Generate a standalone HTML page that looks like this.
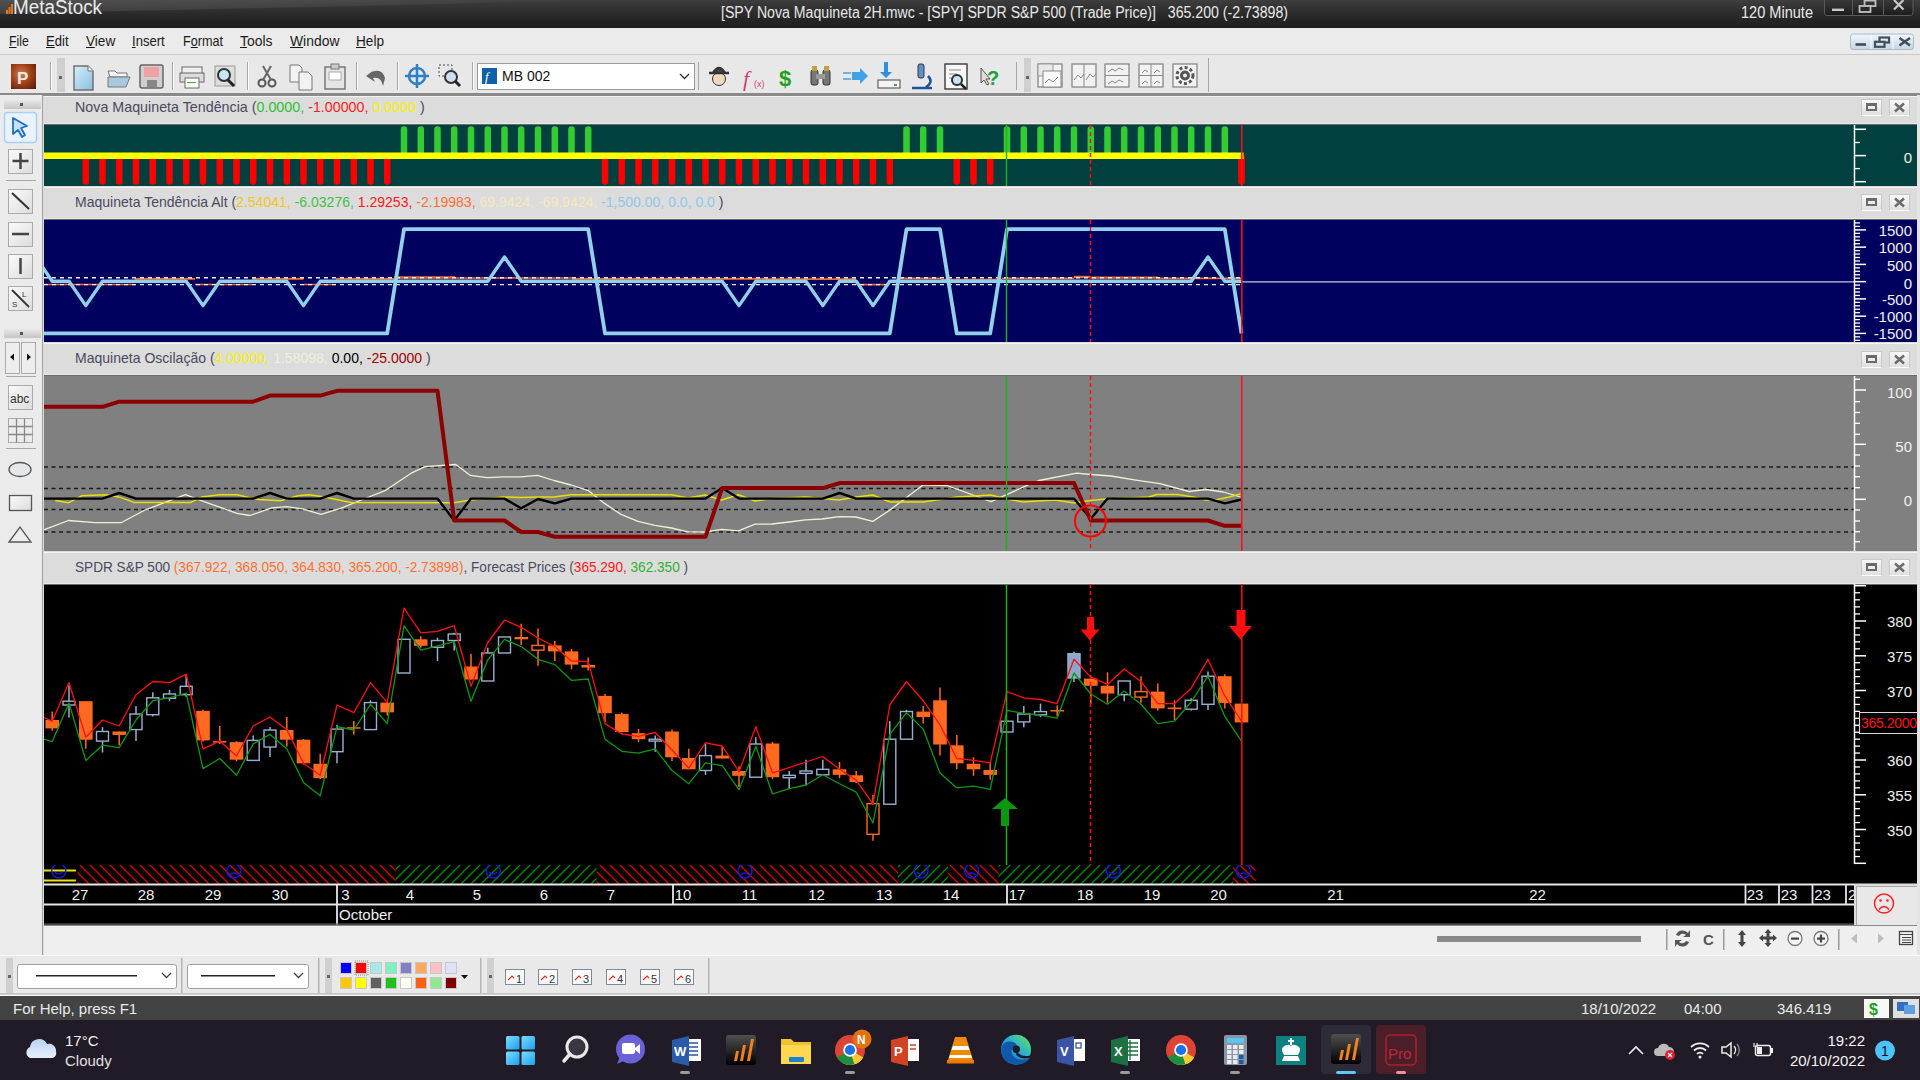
<!DOCTYPE html><html><head><meta charset="utf-8"><style>html,body{margin:0;padding:0;width:1920px;height:1080px;overflow:hidden;background:#dcdcdc;font-family:"Liberation Sans",sans-serif;}svg{display:block}</style></head><body><div style="position:relative;width:1920px;height:1080px;overflow:hidden"><div style="position:absolute;left:0px;top:0px;width:1920px;height:28px;background:linear-gradient(#3e3e3e,#2a2a2a 50%,#1e1e1e);"></div>
<svg style="position:absolute;left:0;top:0" width="1920" height="28"><defs><linearGradient id="gl" x1="0" y1="0" x2="1" y2="0"><stop offset="0" stop-color="#fff" stop-opacity="0.10"/><stop offset="0.6" stop-color="#fff" stop-opacity="0.06"/><stop offset="1" stop-color="#fff" stop-opacity="0"/></linearGradient></defs><path d="M0 0 H600 Q350 6 0 14z" fill="url(#gl)"/></svg>
<svg style="position:absolute;left:0;top:0" width="20" height="20"><path d="M6 14 v-4 h2 v4z M8.5 14 v-7 h2 v7z M11 14 v-10 h2 v10z" fill="#e87818"/></svg>
<div style="position:absolute;left:13px;top:-4.5px;font-size:20px;line-height:22px;color:#ececec;white-space:pre;transform:scaleX(0.9420);transform-origin:0 0;">MetaStock</div>
<div style="position:absolute;left:721px;top:3.5px;font-size:16px;line-height:18px;color:#e8e8e8;white-space:pre;transform:scaleX(0.8835);transform-origin:0 0;">[SPY Nova Maquineta 2H.mwc - [SPY] SPDR S&amp;P 500 (Trade Price)]   365.200 (-2.73898)</div>
<div style="position:absolute;left:1741px;top:3.5px;font-size:16px;line-height:18px;color:#e8e8e8;white-space:pre;transform:scaleX(0.9095);transform-origin:0 0;">120 Minute</div>
<svg style="position:absolute;left:0;top:0" width="1920" height="28"><defs><linearGradient id="wb" x1="0" y1="0" x2="0" y2="1"><stop offset="0" stop-color="#404040"/><stop offset="1" stop-color="#1c1c1c"/></linearGradient></defs><rect x="1824.5" y="-4" width="88.5" height="19.5" rx="2.5" fill="url(#wb)" stroke="#5a5a5a"/><rect x="1852" y="0" width="1" height="15" fill="#5a5a5a"/><rect x="1883" y="0" width="1" height="15" fill="#5a5a5a"/><rect x="1832" y="8.6" width="12" height="2.4" fill="#c8c8c8"/><rect x="1864.5" y="0.6" width="11" height="5.5" fill="none" stroke="#c0c0c0" stroke-width="1.8"/><rect x="1859.5" y="6" width="11" height="6" fill="#2a2a2a" stroke="#c0c0c0" stroke-width="1.8"/><path d="M1894 0 L1903.5 9.5 M1903.5 0 L1894 9.5" stroke="#c8c8c8" stroke-width="2.2"/></svg>
<div style="position:absolute;left:0px;top:28px;width:1920px;height:27px;background:#ebebeb;border-bottom:1px solid #c8c8c8;box-sizing:border-box;"></div>
<div style="position:absolute;left:9.4px;top:32px;font-size:15px;line-height:17px;color:#1a1a1a;white-space:pre;transform:scaleX(0.8192);transform-origin:0 0;"><u>F</u>ile</div>
<div style="position:absolute;left:46.2px;top:32px;font-size:15px;line-height:17px;color:#1a1a1a;white-space:pre;transform:scaleX(0.8705);transform-origin:0 0;"><u>E</u>dit</div>
<div style="position:absolute;left:85.8px;top:32px;font-size:15px;line-height:17px;color:#1a1a1a;white-space:pre;transform:scaleX(0.9056);transform-origin:0 0;"><u>V</u>iew</div>
<div style="position:absolute;left:132.3px;top:32px;font-size:15px;line-height:17px;color:#1a1a1a;white-space:pre;transform:scaleX(0.8717);transform-origin:0 0;"><u>I</u>nsert</div>
<div style="position:absolute;left:183px;top:32px;font-size:15px;line-height:17px;color:#1a1a1a;white-space:pre;transform:scaleX(0.8420);transform-origin:0 0;">F<u>o</u>rmat</div>
<div style="position:absolute;left:240px;top:32px;font-size:15px;line-height:17px;color:#1a1a1a;white-space:pre;transform:scaleX(0.9281);transform-origin:0 0;"><u>T</u>ools</div>
<div style="position:absolute;left:289.6px;top:32px;font-size:15px;line-height:17px;color:#1a1a1a;white-space:pre;transform:scaleX(0.9260);transform-origin:0 0;"><u>W</u>indow</div>
<div style="position:absolute;left:356px;top:32px;font-size:15px;line-height:17px;color:#1a1a1a;white-space:pre;transform:scaleX(0.9076);transform-origin:0 0;"><u>H</u>elp</div>
<svg style="position:absolute;left:0;top:28px" width="1920" height="27" viewBox="0 28 1920 27"><defs><linearGradient id="mb" x1="0" y1="0" x2="0" y2="1"><stop offset="0" stop-color="#f2f6fa"/><stop offset="1" stop-color="#c4d6e4"/></linearGradient></defs><rect x="1850.5" y="34" width="63" height="15.5" rx="2.5" fill="url(#mb)" stroke="#a8bccc"/><rect x="1870.5" y="35" width="1" height="14" fill="#f8fbfd"/><rect x="1892.5" y="35" width="1" height="14" fill="#f8fbfd"/><rect x="1855.5" y="43.2" width="10.5" height="2.6" fill="#3c5060"/><rect x="1879.5" y="37.5" width="9.5" height="5" fill="none" stroke="#3c5060" stroke-width="2.2"/><rect x="1875" y="41.8" width="9.5" height="5" fill="#d4e2ec" stroke="#3c5060" stroke-width="2.2"/><path d="M1899.5 38 L1910 45.6 M1910 38 L1899.5 45.6" stroke="#3c5060" stroke-width="2.5"/></svg>
<div style="position:absolute;left:0px;top:55px;width:1920px;height:40px;background:#e8e8e8;border-bottom:2px solid #8a8a8a;box-sizing:border-box;"></div>
<svg style="position:absolute;left:0;top:0" width="1920" height="100"><defs><radialGradient id="pg" cx="0.4" cy="0.4" r="0.8"><stop offset="0" stop-color="#c88050"/><stop offset="0.5" stop-color="#a04018"/><stop offset="1" stop-color="#601808"/></radialGradient><linearGradient id="docg" x1="0" y1="0" x2="1" y2="1"><stop offset="0" stop-color="#d8ecf8"/><stop offset="1" stop-color="#88c0e0"/></linearGradient></defs><rect x="11" y="64" width="25" height="25" fill="url(#pg)"/><text x="17" y="84" font-size="17" font-family="Liberation Sans" font-weight="bold" fill="#f0e8e0">P</text><rect x="50" y="62" width="1" height="28" fill="#a8a8a8"/><rect x="51" y="62" width="1" height="28" fill="#fafafa"/><rect x="172" y="62" width="1" height="28" fill="#a8a8a8"/><rect x="173" y="62" width="1" height="28" fill="#fafafa"/><rect x="247" y="62" width="1" height="28" fill="#a8a8a8"/><rect x="248" y="62" width="1" height="28" fill="#fafafa"/><rect x="356" y="62" width="1" height="28" fill="#a8a8a8"/><rect x="357" y="62" width="1" height="28" fill="#fafafa"/><rect x="397" y="62" width="1" height="28" fill="#a8a8a8"/><rect x="398" y="62" width="1" height="28" fill="#fafafa"/><rect x="472" y="62" width="1" height="28" fill="#a8a8a8"/><rect x="473" y="62" width="1" height="28" fill="#fafafa"/><rect x="57" y="58" width="8" height="34" fill="#cfcfcf"/><rect x="59" y="76" width="3" height="3" fill="#666"/><path d="M74 66 h14 l5 5 v19 h-19z" fill="url(#docg)" stroke="#707070" stroke-width="1.5"/><path d="M88 66 v5 h5" fill="#fff" stroke="#707070"/><path d="M108 71 h7 l2 2 h10 v4 h-17z" fill="#f4f4f4" stroke="#777"/><path d="M108 77 h22 l-4 10 h-18z" fill="#a8c8e0" stroke="#777"/><rect x="140" y="65" width="23" height="23" rx="2" fill="#cfcfcf" stroke="#666" stroke-width="1.5"/><rect x="144" y="67" width="15" height="10" fill="#f0a0a0"/><rect x="147" y="80" width="10" height="7" fill="#888"/><rect x="182" y="67" width="20" height="9" fill="#eee" stroke="#666"/><rect x="180" y="73" width="24" height="9" fill="#ddd" stroke="#666"/><rect x="185" y="78" width="14" height="10" fill="#fff" stroke="#666"/><rect x="187" y="82" width="9" height="1" fill="#4a4"/><rect x="215" y="66" width="20" height="20" fill="#ddd" stroke="#999"/><circle cx="224" cy="75" r="6" fill="#cce4f4" stroke="#333" stroke-width="2"/><path d="M228 80 l6 6" stroke="#222" stroke-width="3"/><circle cx="262" cy="83" r="3.5" fill="none" stroke="#555" stroke-width="2"/><circle cx="272" cy="83" r="3.5" fill="none" stroke="#555" stroke-width="2"/><path d="M263 80 L271 66 M271 80 L263 66" stroke="#666" stroke-width="2"/><path d="M290 65 h9 l3 3 v14 h-12z" fill="#f2f2f2" stroke="#777"/><path d="M299 72 h9 l4 4 v14 h-13z" fill="#f2f2f2" stroke="#777"/><rect x="325" y="67" width="20" height="22" fill="#e4e4e4" stroke="#777" stroke-width="1.5"/><rect x="331" y="64" width="8" height="5" fill="#ccc" stroke="#777"/><rect x="329" y="72" width="12" height="8" fill="#fff" stroke="#aaa"/><path d="M372 72 q10 -4 13 6 l-2 8 q-2 -10 -10 -8 l2 4 l-9 -6 l8 -6z" fill="#666"/><circle cx="417" cy="76" r="8" fill="#dfe8f0" stroke="#3080c0" stroke-width="2.5"/><path d="M417 64 v24 M405 76 h24" stroke="#3080c0" stroke-width="2.5"/><rect x="439" y="65" width="13" height="11" fill="none" stroke="#444" stroke-dasharray="2 2"/><circle cx="451" cy="77" r="6" fill="#cce0f0" stroke="#333" stroke-width="2"/><path d="M455 81 l5 5" stroke="#222" stroke-width="3"/><rect x="477.5" y="63.5" width="217" height="26" fill="#fff" stroke="#9a9a9a"/><rect x="482" y="68" width="15" height="16" fill="#1060a8"/><text x="485" y="81" font-size="13" font-style="italic" font-family="Liberation Serif" fill="#fff">f</text><text x="502" y="81" font-size="14" font-family="Liberation Sans" fill="#111">MB 002</text><path d="M680 74 l4.5 4.5 l4.5 -4.5" stroke="#333" stroke-width="1.3" fill="none"/><rect x="698" y="62" width="1" height="28" fill="#a8a8a8"/><circle cx="719" cy="79" r="6.5" fill="#f0d8c0" stroke="#333"/><path d="M709 73 h20 M713 73 q6 -10 12 0" stroke="#333" stroke-width="2.5" fill="#444"/><text x="743" y="86" font-size="22" font-style="italic" font-family="Liberation Serif" fill="#d04070">f</text><text x="754" y="87" font-size="9" font-family="Liberation Sans" fill="#d04070">(x)</text><text x="779" y="86" font-size="22" font-weight="bold" font-family="Liberation Sans" fill="#20a020">$</text><rect x="811" y="70" width="7" height="15" rx="2" fill="#777" stroke="#333"/><rect x="823" y="70" width="7" height="15" rx="2" fill="#777" stroke="#333"/><rect x="816" y="74" width="9" height="5" fill="#999"/><rect x="812" y="66" width="5" height="5" fill="#c0a040"/><rect x="824" y="66" width="5" height="5" fill="#c0a040"/><path d="M843 73 h8 M843 79 h8" stroke="#70b0e8" stroke-width="2"/><path d="M852 72 h8 v-4 l8 8 l-8 8 v-4 h-8z" fill="#40a0e8"/><path d="M884 62 v10 h-4 l6 6 l6 -6 h-4 v-10z" fill="#3090e0"/><rect x="878" y="80" width="22" height="8" fill="#f4f4f4" stroke="#444"/><rect x="894" y="84" width="3" height="2" fill="#4a4"/><rect x="918" y="64" width="6" height="14" rx="2" fill="#6090c0" stroke="#335"/><path d="M912 88 h20 M928 76 q6 6 -2 11" stroke="#2050a0" stroke-width="2.5" fill="none"/><rect x="945" y="64" width="22" height="25" fill="#f8f8f8" stroke="#444" stroke-width="1.5"/><path d="M949 70 h12 M949 74 h8 M949 78 h6" stroke="#888"/><circle cx="957" cy="80" r="5" fill="#cce0f0" stroke="#233" stroke-width="2"/><path d="M961 84 l5 5" stroke="#222" stroke-width="2.5"/><path d="M981 68 l0 15 l3 -3 l3 5 l2 -1 l-3 -5 l4 0z" fill="#ddd" stroke="#555"/><text x="987" y="85" font-size="20" font-weight="bold" font-family="Liberation Sans" fill="#20a040">?</text><rect x="1016" y="62" width="1" height="28" fill="#a8a8a8"/><rect x="1024" y="58" width="7" height="34" fill="#cfcfcf"/><rect x="1026" y="76" width="3" height="3" fill="#666"/><rect x="1038" y="64" width="24" height="23" fill="#f2f2f2" stroke="#888" stroke-width="1.3"/><rect x="1072" y="64" width="24" height="23" fill="#f2f2f2" stroke="#888" stroke-width="1.3"/><rect x="1105" y="64" width="24" height="23" fill="#f2f2f2" stroke="#888" stroke-width="1.3"/><rect x="1139" y="64" width="24" height="23" fill="#f2f2f2" stroke="#888" stroke-width="1.3"/><rect x="1173" y="64" width="24" height="23" fill="#f2f2f2" stroke="#888" stroke-width="1.3"/><rect x="1038" y="64" width="15" height="12" fill="#e8e8e8" stroke="#999"/><rect x="1043" y="71" width="18" height="16" fill="#f8f8f8" stroke="#888"/><path d="M1045 83 l4 -4 l4 3 l5 -5" stroke="#888" fill="none"/><path d="M1084 64 v23 M1074 80 l4 -5 l3 3 l3 -4 M1086 80 l4 -6 l3 3 l3 -3" stroke="#888" fill="none"/><path d="M1105 75.5 h24 M1108 72 l4 -3 l3 2 l4 -3 l4 2 M1108 84 l4 -3 l3 2 l4 -3 l4 2" stroke="#888" fill="none"/><path d="M1151 64 v23 M1139 75.5 h24 M1142 73 l3 -3 l3 2 M1154 73 l3 -3 l3 2 M1142 84 l3 -3 l3 2 M1154 84 l3 -3 l3 2" stroke="#888" fill="none"/><circle cx="1185" cy="75.5" r="5" fill="#555"/><circle cx="1185" cy="75.5" r="8" fill="none" stroke="#555" stroke-width="3" stroke-dasharray="3 2.3"/><circle cx="1185" cy="75.5" r="2" fill="#eee"/><rect x="1208" y="58" width="1" height="34" fill="#a8a8a8"/></svg>
<div style="position:absolute;left:0px;top:95px;width:42px;height:860px;background:#ebebeb;"></div>
<div style="position:absolute;left:42px;top:95px;width:1px;height:860px;background:#a0a0a0;"></div>
<svg style="position:absolute;left:0;top:95px" width="43" height="860" viewBox="0 95 43 860"><defs><linearGradient id="btng" x1="0" y1="0" x2="1" y2="1"><stop offset="0" stop-color="#fafafa"/><stop offset="1" stop-color="#dcdcdc"/></linearGradient><linearGradient id="grip" x1="0" y1="0" x2="0" y2="1"><stop offset="0" stop-color="#e8e8e8"/><stop offset="1" stop-color="#c4c4c4"/></linearGradient></defs><rect x="4" y="100" width="37" height="9" fill="url(#grip)"/><rect x="20" y="103" width="3" height="3" fill="#555"/><rect x="4" y="329" width="37" height="9" fill="url(#grip)"/><rect x="20" y="332" width="3" height="3" fill="#555"/><rect x="4.5" y="112.5" width="32" height="30" rx="3" fill="#eaf2fb" stroke="#a8d0f4" stroke-width="1.5"/><path d="M13 118 l14 8 l-6 2 l4 7 l-3 2 l-4 -7 l-5 4z" fill="#c8e0f8" stroke="#2070c0" stroke-width="1.8" stroke-linejoin="round"/><rect x="8.5" y="149.5" width="24" height="24" fill="url(#btng)" stroke="#aaa"/><path d="M20.5 153 v16 M12.5 161 h16" stroke="#444" stroke-width="2.5"/><rect x="6" y="180" width="30" height="1" fill="#a8a8a8"/><rect x="8.5" y="189.5" width="24" height="24" fill="url(#btng)" stroke="#aaa"/><path d="M12 193 l17 16" stroke="#333" stroke-width="2"/><rect x="8.5" y="222.5" width="24" height="24" fill="url(#btng)" stroke="#aaa"/><path d="M12 234 h17" stroke="#444" stroke-width="2.5"/><rect x="8.5" y="254.5" width="24" height="24" fill="url(#btng)" stroke="#aaa"/><path d="M20.5 258 v16" stroke="#444" stroke-width="2.5"/><rect x="8.5" y="286.5" width="24" height="24" fill="url(#btng)" stroke="#aaa"/><path d="M12 290 l17 17" stroke="#333" stroke-width="1.8"/><text x="22" y="297" font-size="8" font-family="Liberation Sans" fill="#333">L</text><text x="12" y="307" font-size="8" font-family="Liberation Sans" fill="#333">S</text><rect x="5.5" y="342.5" width="14" height="31" fill="#ededed" stroke="#aaa"/><rect x="21.5" y="342.5" width="14" height="31" fill="#ededed" stroke="#aaa"/><path d="M10 357 l4 -3.5 v7z M31 357 l-4 -3.5 v7z" fill="#111"/><rect x="6" y="376" width="30" height="1" fill="#a8a8a8"/><rect x="8.5" y="385.5" width="24" height="24" fill="url(#btng)" stroke="#aaa"/><text x="10" y="403" font-size="12" font-family="Liberation Sans" fill="#333">abc</text><rect x="8.5" y="418.5" width="24" height="24" fill="#ececec" stroke="#aaa"/><path d="M8.5 426.5 h24 M8.5 434.5 h24 M16.5 418.5 v24 M24.5 418.5 v24" stroke="#888" stroke-width="1.3"/><rect x="6" y="448" width="30" height="1" fill="#a8a8a8"/><ellipse cx="20" cy="469.5" rx="11" ry="7" fill="#e4e8ec" stroke="#555" stroke-width="1.3"/><rect x="9.5" y="495.5" width="22" height="15" fill="url(#btng)" stroke="#555" stroke-width="1.3"/><path d="M9 542 l11 -15 l11 15z" fill="#eee" stroke="#555" stroke-width="1.3"/></svg>
<div style="position:absolute;left:43px;top:95px;width:1877px;height:860px;background:#dcdcdc;"></div>
<div style="position:absolute;left:43px;top:95px;width:1877px;height:1px;background:#8a8a8a;"></div>
<div style="position:absolute;left:1917px;top:95px;width:3px;height:860px;background:#e4e4e4;"></div>
<div style="position:absolute;left:44px;top:96px;width:1873px;height:29px;background:#dcdcdc;border-top:1px solid #f4f4f4;box-sizing:border-box"></div>
<div style="position:absolute;left:44px;top:124px;width:1873px;height:1px;background:#6a6a6a"></div>
<div style="position:absolute;left:44px;top:125px;width:1873px;height:61px;background:#02403f"></div>
<div style="position:absolute;left:44px;top:123px;width:1873px;height:1px;background:#e8e8e8"></div>
<div style="position:absolute;left:1861px;top:99px;width:21px;height:17px;background:linear-gradient(#f8f8f8,#e0e0e0);border:1px solid #c8c8c8;border-bottom-color:#fff;box-sizing:border-box;"></div>
<div style="position:absolute;left:1889px;top:99px;width:21px;height:17px;background:linear-gradient(#f8f8f8,#e0e0e0);border:1px solid #c8c8c8;border-bottom-color:#fff;box-sizing:border-box;"></div>
<div style="position:absolute;left:1866px;top:103px;width:11px;height:8px;border:2px solid #6a6a6a;border-top-width:3px;box-sizing:border-box"></div>
<svg style="position:absolute;left:1889px;top:99px" width="21" height="17"><path d="M6 4.5 L15 12.5 M15 4.5 L6 12.5" stroke="#6a6a6a" stroke-width="2.4"/></svg>
<div style="position:absolute;left:44px;top:187px;width:1873px;height:33px;background:#dcdcdc;border-top:1px solid #f4f4f4;box-sizing:border-box"></div>
<div style="position:absolute;left:44px;top:219px;width:1873px;height:1px;background:#6a6a6a"></div>
<div style="position:absolute;left:44px;top:220px;width:1873px;height:122px;background:#00005e"></div>
<div style="position:absolute;left:44px;top:218px;width:1873px;height:1px;background:#e8e8e8"></div>
<div style="position:absolute;left:1861px;top:194px;width:21px;height:17px;background:linear-gradient(#f8f8f8,#e0e0e0);border:1px solid #c8c8c8;border-bottom-color:#fff;box-sizing:border-box;"></div>
<div style="position:absolute;left:1889px;top:194px;width:21px;height:17px;background:linear-gradient(#f8f8f8,#e0e0e0);border:1px solid #c8c8c8;border-bottom-color:#fff;box-sizing:border-box;"></div>
<div style="position:absolute;left:1866px;top:198px;width:11px;height:8px;border:2px solid #6a6a6a;border-top-width:3px;box-sizing:border-box"></div>
<svg style="position:absolute;left:1889px;top:194px" width="21" height="17"><path d="M6 4.5 L15 12.5 M15 4.5 L6 12.5" stroke="#6a6a6a" stroke-width="2.4"/></svg>
<div style="position:absolute;left:44px;top:343px;width:1873px;height:33px;background:#dcdcdc;border-top:1px solid #f4f4f4;box-sizing:border-box"></div>
<div style="position:absolute;left:44px;top:375px;width:1873px;height:1px;background:#6a6a6a"></div>
<div style="position:absolute;left:44px;top:376px;width:1873px;height:175px;background:#808080"></div>
<div style="position:absolute;left:44px;top:374px;width:1873px;height:1px;background:#e8e8e8"></div>
<div style="position:absolute;left:1861px;top:350.5px;width:21px;height:17px;background:linear-gradient(#f8f8f8,#e0e0e0);border:1px solid #c8c8c8;border-bottom-color:#fff;box-sizing:border-box;"></div>
<div style="position:absolute;left:1889px;top:350.5px;width:21px;height:17px;background:linear-gradient(#f8f8f8,#e0e0e0);border:1px solid #c8c8c8;border-bottom-color:#fff;box-sizing:border-box;"></div>
<div style="position:absolute;left:1866px;top:354.5px;width:11px;height:8px;border:2px solid #6a6a6a;border-top-width:3px;box-sizing:border-box"></div>
<svg style="position:absolute;left:1889px;top:350.5px" width="21" height="17"><path d="M6 4.5 L15 12.5 M15 4.5 L6 12.5" stroke="#6a6a6a" stroke-width="2.4"/></svg>
<div style="position:absolute;left:44px;top:552px;width:1873px;height:33px;background:#dcdcdc;border-top:1px solid #f4f4f4;box-sizing:border-box"></div>
<div style="position:absolute;left:44px;top:584px;width:1873px;height:1px;background:#6a6a6a"></div>
<div style="position:absolute;left:44px;top:585px;width:1873px;height:299px;background:#000000"></div>
<div style="position:absolute;left:44px;top:583px;width:1873px;height:1px;background:#e8e8e8"></div>
<div style="position:absolute;left:1861px;top:559px;width:21px;height:17px;background:linear-gradient(#f8f8f8,#e0e0e0);border:1px solid #c8c8c8;border-bottom-color:#fff;box-sizing:border-box;"></div>
<div style="position:absolute;left:1889px;top:559px;width:21px;height:17px;background:linear-gradient(#f8f8f8,#e0e0e0);border:1px solid #c8c8c8;border-bottom-color:#fff;box-sizing:border-box;"></div>
<div style="position:absolute;left:1866px;top:563px;width:11px;height:8px;border:2px solid #6a6a6a;border-top-width:3px;box-sizing:border-box"></div>
<svg style="position:absolute;left:1889px;top:559px" width="21" height="17"><path d="M6 4.5 L15 12.5 M15 4.5 L6 12.5" stroke="#6a6a6a" stroke-width="2.4"/></svg>
<div style="position:absolute;left:74.6px;top:98px;font-size:15px;line-height:17px;color:#4a4a5c;white-space:pre;transform:scaleX(0.9519);transform-origin:0 0;"><span style="color:#4a4a5c">Nova Maquineta Tendência (</span><span style="color:#30c030">0.0000, </span><span style="color:#ff2020">-1.00000, </span><span style="color:#f8f000">0.0000</span><span style="color:#4a4a5c"> )</span></div>
<div style="position:absolute;left:74.6px;top:193px;font-size:15px;line-height:17px;color:#4a4a5c;white-space:pre;transform:scaleX(0.9349);transform-origin:0 0;"><span style="color:#4a4a5c">Maquineta Tendência Alt (</span><span style="color:#f0c820">2.54041, </span><span style="color:#40c040">-6.03276, </span><span style="color:#ff1818">1.29253, </span><span style="color:#ff7030">-2.19983, </span><span style="color:#f4e8c0">69.9424, </span><span style="color:#f4e8c0">-69.9424, </span><span style="color:#90c8e8">-1,500.00, 0.0, 0.0</span><span style="color:#4a4a5c"> )</span></div>
<div style="position:absolute;left:74.6px;top:349px;font-size:15px;line-height:17px;color:#4a4a5c;white-space:pre;transform:scaleX(0.9354);transform-origin:0 0;"><span style="color:#4a4a5c">Maquineta Oscilação (</span><span style="color:#f8f000">4.00000, </span><span style="color:#f0f0d8">1.58098, </span><span style="color:#000">0.00, </span><span style="color:#a00000">-25.0000</span><span style="color:#4a4a5c"> )</span></div>
<div style="position:absolute;left:74.6px;top:558px;font-size:15px;line-height:17px;color:#4a4a5c;white-space:pre;transform:scaleX(0.9068);transform-origin:0 0;"><span style="color:#4a4a5c">SPDR S&amp;P 500 </span><span style="color:#ff7030">(367.922, 368.050, 364.830, 365.200, -2.73898)</span><span style="color:#4a4a5c">, Forecast Prices (</span><span style="color:#ff1818">365.290, </span><span style="color:#30b030">362.350</span><span style="color:#4a4a5c"> )</span></div>
<svg style="position:absolute;left:0;top:0" width="1920" height="1080"><defs><clipPath id="c1"><rect x="44" y="124" width="1810" height="62"/></clipPath><clipPath id="c2"><rect x="44" y="219" width="1810" height="123"/></clipPath><clipPath id="c3"><rect x="44" y="375" width="1810" height="176"/></clipPath><clipPath id="c4"><rect x="44" y="584" width="1810" height="300"/></clipPath><pattern id="hr" width="10" height="10" patternUnits="userSpaceOnUse" x="0" y="865"><path d="M-2.5 -2.5 L12.5 12.5 M-2.5 7.5 L2.5 12.5 M7.5 -2.5 L12.5 2.5" stroke="#e00000" stroke-width="1.25"/></pattern><pattern id="hg" width="10" height="10" patternUnits="userSpaceOnUse" x="0" y="865"><path d="M-2.5 12.5 L12.5 -2.5 M-2.5 2.5 L2.5 -2.5 M7.5 12.5 L12.5 7.5" stroke="#009000" stroke-width="1.25"/></pattern></defs><g clip-path="url(#c1)"><line x1="85.8" y1="158" x2="85.8" y2="181.5" stroke="#ff0000" stroke-width="6.5" stroke-linecap="round"/><line x1="102.5" y1="158" x2="102.5" y2="181.5" stroke="#ff0000" stroke-width="6.5" stroke-linecap="round"/><line x1="119.2" y1="158" x2="119.2" y2="181.5" stroke="#ff0000" stroke-width="6.5" stroke-linecap="round"/><line x1="136.0" y1="158" x2="136.0" y2="181.5" stroke="#ff0000" stroke-width="6.5" stroke-linecap="round"/><line x1="152.8" y1="158" x2="152.8" y2="181.5" stroke="#ff0000" stroke-width="6.5" stroke-linecap="round"/><line x1="169.5" y1="158" x2="169.5" y2="181.5" stroke="#ff0000" stroke-width="6.5" stroke-linecap="round"/><line x1="186.2" y1="158" x2="186.2" y2="181.5" stroke="#ff0000" stroke-width="6.5" stroke-linecap="round"/><line x1="203.0" y1="158" x2="203.0" y2="181.5" stroke="#ff0000" stroke-width="6.5" stroke-linecap="round"/><line x1="219.8" y1="158" x2="219.8" y2="181.5" stroke="#ff0000" stroke-width="6.5" stroke-linecap="round"/><line x1="236.5" y1="158" x2="236.5" y2="181.5" stroke="#ff0000" stroke-width="6.5" stroke-linecap="round"/><line x1="253.2" y1="158" x2="253.2" y2="181.5" stroke="#ff0000" stroke-width="6.5" stroke-linecap="round"/><line x1="270.0" y1="158" x2="270.0" y2="181.5" stroke="#ff0000" stroke-width="6.5" stroke-linecap="round"/><line x1="286.8" y1="158" x2="286.8" y2="181.5" stroke="#ff0000" stroke-width="6.5" stroke-linecap="round"/><line x1="303.5" y1="158" x2="303.5" y2="181.5" stroke="#ff0000" stroke-width="6.5" stroke-linecap="round"/><line x1="320.2" y1="158" x2="320.2" y2="181.5" stroke="#ff0000" stroke-width="6.5" stroke-linecap="round"/><line x1="337.0" y1="158" x2="337.0" y2="181.5" stroke="#ff0000" stroke-width="6.5" stroke-linecap="round"/><line x1="353.8" y1="158" x2="353.8" y2="181.5" stroke="#ff0000" stroke-width="6.5" stroke-linecap="round"/><line x1="370.5" y1="158" x2="370.5" y2="181.5" stroke="#ff0000" stroke-width="6.5" stroke-linecap="round"/><line x1="387.2" y1="158" x2="387.2" y2="181.5" stroke="#ff0000" stroke-width="6.5" stroke-linecap="round"/><line x1="404.0" y1="129.5" x2="404.0" y2="153" stroke="#33cc33" stroke-width="6.5" stroke-linecap="round"/><line x1="420.8" y1="129.5" x2="420.8" y2="153" stroke="#33cc33" stroke-width="6.5" stroke-linecap="round"/><line x1="437.5" y1="129.5" x2="437.5" y2="153" stroke="#33cc33" stroke-width="6.5" stroke-linecap="round"/><line x1="454.2" y1="129.5" x2="454.2" y2="153" stroke="#33cc33" stroke-width="6.5" stroke-linecap="round"/><line x1="471.0" y1="129.5" x2="471.0" y2="153" stroke="#33cc33" stroke-width="6.5" stroke-linecap="round"/><line x1="487.8" y1="129.5" x2="487.8" y2="153" stroke="#33cc33" stroke-width="6.5" stroke-linecap="round"/><line x1="504.5" y1="129.5" x2="504.5" y2="153" stroke="#33cc33" stroke-width="6.5" stroke-linecap="round"/><line x1="521.2" y1="129.5" x2="521.2" y2="153" stroke="#33cc33" stroke-width="6.5" stroke-linecap="round"/><line x1="538.0" y1="129.5" x2="538.0" y2="153" stroke="#33cc33" stroke-width="6.5" stroke-linecap="round"/><line x1="554.8" y1="129.5" x2="554.8" y2="153" stroke="#33cc33" stroke-width="6.5" stroke-linecap="round"/><line x1="571.5" y1="129.5" x2="571.5" y2="153" stroke="#33cc33" stroke-width="6.5" stroke-linecap="round"/><line x1="588.2" y1="129.5" x2="588.2" y2="153" stroke="#33cc33" stroke-width="6.5" stroke-linecap="round"/><line x1="605.0" y1="158" x2="605.0" y2="181.5" stroke="#ff0000" stroke-width="6.5" stroke-linecap="round"/><line x1="621.8" y1="158" x2="621.8" y2="181.5" stroke="#ff0000" stroke-width="6.5" stroke-linecap="round"/><line x1="638.5" y1="158" x2="638.5" y2="181.5" stroke="#ff0000" stroke-width="6.5" stroke-linecap="round"/><line x1="655.2" y1="158" x2="655.2" y2="181.5" stroke="#ff0000" stroke-width="6.5" stroke-linecap="round"/><line x1="672.0" y1="158" x2="672.0" y2="181.5" stroke="#ff0000" stroke-width="6.5" stroke-linecap="round"/><line x1="688.8" y1="158" x2="688.8" y2="181.5" stroke="#ff0000" stroke-width="6.5" stroke-linecap="round"/><line x1="705.5" y1="158" x2="705.5" y2="181.5" stroke="#ff0000" stroke-width="6.5" stroke-linecap="round"/><line x1="722.2" y1="158" x2="722.2" y2="181.5" stroke="#ff0000" stroke-width="6.5" stroke-linecap="round"/><line x1="739.0" y1="158" x2="739.0" y2="181.5" stroke="#ff0000" stroke-width="6.5" stroke-linecap="round"/><line x1="755.8" y1="158" x2="755.8" y2="181.5" stroke="#ff0000" stroke-width="6.5" stroke-linecap="round"/><line x1="772.5" y1="158" x2="772.5" y2="181.5" stroke="#ff0000" stroke-width="6.5" stroke-linecap="round"/><line x1="789.2" y1="158" x2="789.2" y2="181.5" stroke="#ff0000" stroke-width="6.5" stroke-linecap="round"/><line x1="806.0" y1="158" x2="806.0" y2="181.5" stroke="#ff0000" stroke-width="6.5" stroke-linecap="round"/><line x1="822.8" y1="158" x2="822.8" y2="181.5" stroke="#ff0000" stroke-width="6.5" stroke-linecap="round"/><line x1="839.5" y1="158" x2="839.5" y2="181.5" stroke="#ff0000" stroke-width="6.5" stroke-linecap="round"/><line x1="856.2" y1="158" x2="856.2" y2="181.5" stroke="#ff0000" stroke-width="6.5" stroke-linecap="round"/><line x1="873.0" y1="158" x2="873.0" y2="181.5" stroke="#ff0000" stroke-width="6.5" stroke-linecap="round"/><line x1="889.8" y1="158" x2="889.8" y2="181.5" stroke="#ff0000" stroke-width="6.5" stroke-linecap="round"/><line x1="906.5" y1="129.5" x2="906.5" y2="153" stroke="#33cc33" stroke-width="6.5" stroke-linecap="round"/><line x1="923.2" y1="129.5" x2="923.2" y2="153" stroke="#33cc33" stroke-width="6.5" stroke-linecap="round"/><line x1="940.0" y1="129.5" x2="940.0" y2="153" stroke="#33cc33" stroke-width="6.5" stroke-linecap="round"/><line x1="956.8" y1="158" x2="956.8" y2="181.5" stroke="#ff0000" stroke-width="6.5" stroke-linecap="round"/><line x1="973.5" y1="158" x2="973.5" y2="181.5" stroke="#ff0000" stroke-width="6.5" stroke-linecap="round"/><line x1="990.2" y1="158" x2="990.2" y2="181.5" stroke="#ff0000" stroke-width="6.5" stroke-linecap="round"/><line x1="1007.0" y1="129.5" x2="1007.0" y2="153" stroke="#33cc33" stroke-width="6.5" stroke-linecap="round"/><line x1="1023.8" y1="129.5" x2="1023.8" y2="153" stroke="#33cc33" stroke-width="6.5" stroke-linecap="round"/><line x1="1040.5" y1="129.5" x2="1040.5" y2="153" stroke="#33cc33" stroke-width="6.5" stroke-linecap="round"/><line x1="1057.2" y1="129.5" x2="1057.2" y2="153" stroke="#33cc33" stroke-width="6.5" stroke-linecap="round"/><line x1="1074.0" y1="129.5" x2="1074.0" y2="153" stroke="#33cc33" stroke-width="6.5" stroke-linecap="round"/><line x1="1090.8" y1="129.5" x2="1090.8" y2="153" stroke="#33cc33" stroke-width="6.5" stroke-linecap="round"/><line x1="1107.5" y1="129.5" x2="1107.5" y2="153" stroke="#33cc33" stroke-width="6.5" stroke-linecap="round"/><line x1="1124.2" y1="129.5" x2="1124.2" y2="153" stroke="#33cc33" stroke-width="6.5" stroke-linecap="round"/><line x1="1141.0" y1="129.5" x2="1141.0" y2="153" stroke="#33cc33" stroke-width="6.5" stroke-linecap="round"/><line x1="1157.8" y1="129.5" x2="1157.8" y2="153" stroke="#33cc33" stroke-width="6.5" stroke-linecap="round"/><line x1="1174.5" y1="129.5" x2="1174.5" y2="153" stroke="#33cc33" stroke-width="6.5" stroke-linecap="round"/><line x1="1191.2" y1="129.5" x2="1191.2" y2="153" stroke="#33cc33" stroke-width="6.5" stroke-linecap="round"/><line x1="1208.0" y1="129.5" x2="1208.0" y2="153" stroke="#33cc33" stroke-width="6.5" stroke-linecap="round"/><line x1="1224.8" y1="129.5" x2="1224.8" y2="153" stroke="#33cc33" stroke-width="6.5" stroke-linecap="round"/><line x1="1241.5" y1="158" x2="1241.5" y2="181.5" stroke="#ff0000" stroke-width="6.5" stroke-linecap="round"/><rect x="44" y="152.5" width="1199.5" height="6.5" fill="#ffff00"/><line x1="1241.5" y1="159" x2="1241.5" y2="183" stroke="#ff0000" stroke-width="6"/></g><g clip-path="url(#c2)"><line x1="44" y1="284.5" x2="135" y2="284.5" stroke="#ff6a20" stroke-width="1.7"/><line x1="135" y1="278.8" x2="195" y2="278.8" stroke="#ff6a20" stroke-width="1.7"/><line x1="195" y1="284.5" x2="252" y2="284.5" stroke="#ff6a20" stroke-width="1.7"/><line x1="252" y1="278.8" x2="303.5" y2="278.8" stroke="#ff6a20" stroke-width="1.7"/><line x1="303.5" y1="284.5" x2="336" y2="284.5" stroke="#ff6a20" stroke-width="1.7"/><line x1="336" y1="278.8" x2="394" y2="278.8" stroke="#ff6a20" stroke-width="1.7"/><line x1="394" y1="277.5" x2="455" y2="277.5" stroke="#ff6a20" stroke-width="2.4"/><line x1="455" y1="278" x2="572" y2="278" stroke="#ff6a20" stroke-width="1.7"/><line x1="572" y1="278.8" x2="765" y2="278.8" stroke="#ff6a20" stroke-width="1.7"/><line x1="765" y1="279.2" x2="856" y2="279.2" stroke="#ff6a20" stroke-width="1.7"/><line x1="860" y1="284.6" x2="886" y2="284.6" stroke="#ff6a20" stroke-width="1.7"/><line x1="899" y1="278.4" x2="941" y2="278.4" stroke="#ff6a20" stroke-width="1.7"/><line x1="941" y1="279.5" x2="1002" y2="279.5" stroke="#ff6a20" stroke-width="1.7"/><line x1="1002" y1="278.4" x2="1074" y2="278.4" stroke="#ff6a20" stroke-width="1.7"/><line x1="1074" y1="277" x2="1090.5" y2="277" stroke="#ff6a20" stroke-width="2.4"/><line x1="1090.5" y1="277.6" x2="1158" y2="277.6" stroke="#ff6a20" stroke-width="2.4"/><line x1="1158" y1="278.4" x2="1241" y2="278.4" stroke="#ff6a20" stroke-width="1.7"/><line x1="44" y1="277.8" x2="1241.5" y2="277.8" stroke="#e8e8f0" stroke-width="1.4" stroke-dasharray="4 4"/><line x1="44" y1="284.6" x2="1241.5" y2="284.6" stroke="#e8e8f0" stroke-width="1.4" stroke-dasharray="4 4"/><line x1="1241.5" y1="281.8" x2="1854" y2="281.8" stroke="#c8c8d8" stroke-width="1.3"/><polyline points="35.5,257.0 52.2,281.3 69.0,281.3 85.8,305.6 102.5,281.3 119.2,281.3 136.0,281.3 152.8,281.3 169.5,281.3 186.2,281.3 203.0,305.6 219.8,281.3 236.5,281.3 253.2,281.3 270.0,281.3 286.8,281.3 303.5,305.6 320.2,281.3 337.0,281.3 353.8,281.3 370.5,281.3 387.2,281.3 404.0,281.3 420.8,281.3 437.5,281.3 454.2,281.3 471.0,281.3 487.8,281.3 504.5,257.0 521.2,281.3 538.0,281.3 554.8,281.3 571.5,281.3 588.2,281.3 605.0,281.3 621.8,281.3 638.5,281.3 655.2,281.3 672.0,281.3 688.8,281.3 705.5,281.3 722.2,281.3 739.0,305.6 755.8,281.3 772.5,281.3 789.2,281.3 806.0,281.3 822.8,305.6 839.5,281.3 856.2,281.3 873.0,305.6 889.8,281.3 906.5,281.3 923.2,281.3 940.0,281.3 956.8,281.3 973.5,281.3 990.2,281.3 1007.0,281.3 1023.8,281.3 1040.5,281.3 1057.2,281.3 1074.0,281.3 1090.8,281.3 1107.5,281.3 1124.2,281.3 1141.0,281.3 1157.8,281.3 1174.5,281.3 1191.2,281.3 1208.0,257.0 1224.8,281.3 1241.5,281.3" fill="none" stroke="#90d0e8" stroke-width="3.4" stroke-linejoin="round" /><polyline points="35.5,333.4 52.2,333.4 69.0,333.4 85.8,333.4 102.5,333.4 119.2,333.4 136.0,333.4 152.8,333.4 169.5,333.4 186.2,333.4 203.0,333.4 219.8,333.4 236.5,333.4 253.2,333.4 270.0,333.4 286.8,333.4 303.5,333.4 320.2,333.4 337.0,333.4 353.8,333.4 370.5,333.4 387.2,333.4 404.0,229.2 420.8,229.2 437.5,229.2 454.2,229.2 471.0,229.2 487.8,229.2 504.5,229.2 521.2,229.2 538.0,229.2 554.8,229.2 571.5,229.2 588.2,229.2 605.0,333.4 621.8,333.4 638.5,333.4 655.2,333.4 672.0,333.4 688.8,333.4 705.5,333.4 722.2,333.4 739.0,333.4 755.8,333.4 772.5,333.4 789.2,333.4 806.0,333.4 822.8,333.4 839.5,333.4 856.2,333.4 873.0,333.4 889.8,333.4 906.5,229.2 923.2,229.2 940.0,229.2 956.8,333.4 973.5,333.4 990.2,333.4 1007.0,229.2 1023.8,229.2 1040.5,229.2 1057.2,229.2 1074.0,229.2 1090.8,229.2 1107.5,229.2 1124.2,229.2 1141.0,229.2 1157.8,229.2 1174.5,229.2 1191.2,229.2 1208.0,229.2 1224.8,229.2 1241.5,333.4" fill="none" stroke="#90d0e8" stroke-width="3.8" stroke-linejoin="round" /></g><g clip-path="url(#c3)"><line x1="44" y1="467" x2="1854" y2="467" stroke="#1a1a1a" stroke-width="1.6" stroke-dasharray="4 3.5"/><line x1="44" y1="488.5" x2="1854" y2="488.5" stroke="#1a1a1a" stroke-width="1.6" stroke-dasharray="4 3.5"/><line x1="44" y1="509.5" x2="1854" y2="509.5" stroke="#1a1a1a" stroke-width="1.6" stroke-dasharray="4 3.5"/><line x1="44" y1="532" x2="1854" y2="532" stroke="#1a1a1a" stroke-width="1.6" stroke-dasharray="4 3.5"/><polyline points="44.4,529.7 68.4,520.5 94.7,522.7 121.0,522.7 145.0,510.0 169.0,500.8 185.5,494.7 201.9,500.8 237.0,513.3 250.0,515.5 271.9,507.8 287.2,506.7 302.5,508.9 321.1,514.4 341.9,507.8 363.8,499.0 385.7,490.3 411.9,472.8 425.0,466.7 455.7,464.5 470.5,475.4 487.0,477.6 504.0,476.8 520.8,476.8 537.5,475.4 554.0,480.5 571.0,485.0 587.8,490.3 604.5,503.4 621.0,514.4 638.0,521.4 655.0,525.3 671.5,528.0 688.0,531.9 705.0,532.0 721.8,529.3 738.5,530.8 755.0,524.2 772.0,524.0 789.0,522.0 805.5,519.9 822.0,519.0 839.0,516.6 855.8,517.0 872.8,521.4 890.0,510.0 923.0,484.9 947.0,485.5 991.0,501.7 1028.0,484.9 1039.0,480.5 1076.7,473.2 1090.5,474.5 1111.0,476.0 1137.4,480.4 1160.0,483.7 1189.0,491.5 1206.0,489.5 1223.3,492.0 1240.5,497.0" fill="none" stroke="#f0f0d8" stroke-width="1.3" stroke-linejoin="round" /><polyline points="55.3,500.6 68.4,502.8 81.6,495.8 105.6,494.7 118.8,496.9 134.0,502.4 191.0,502.4 202.0,496.9 219.4,494.7 237.0,494.7 247.8,497.3 258.8,499.5 280.6,500.8 298.0,495.8 309.0,494.7 324.4,496.9 350.6,502.4 453.8,502.8 470.5,500.0 504.0,497.0 520.8,497.5 537.5,497.0 554.0,497.0 571.0,494.7 655.0,494.7 671.5,494.7 688.0,497.9 705.0,495.0 721.8,500.0 738.5,494.7 755.0,501.0 772.0,498.6 805.5,497.0 839.0,500.0 855.8,497.0 872.8,495.0 890.0,502.0 923.0,502.0 957.0,497.0 991.0,495.0 1006.5,499.0 1023.0,502.0 1055.0,500.0 1074.4,503.0 1086.0,501.0 1106.4,499.0 1148.8,497.0 1156.8,494.5 1177.5,494.5 1194.6,497.3 1206.0,500.0 1217.5,499.5 1229.0,497.0 1240.5,494.0" fill="none" stroke="#e8e000" stroke-width="1.5" stroke-linejoin="round" /><polyline points="44.0,498.6 102.5,498.6 119.2,493.0 136.0,498.6 253.2,498.6 270.0,493.0 286.8,498.6 320.2,498.6 337.0,493.0 353.8,498.6 437.5,498.6 454.2,520.5 471.0,498.6 504.5,498.6 521.2,508.3 538.0,499.0 554.8,503.4 571.5,498.6 705.5,498.6 722.2,488.1 739.0,498.6 822.8,498.6 839.5,493.0 856.2,498.6 1074.0,498.6 1090.8,518.8 1107.5,498.6 1208.0,498.6 1224.8,503.4 1241.5,499.5" fill="none" stroke="#000000" stroke-width="2.4" stroke-linejoin="round" /><polyline points="44.0,406.8 102.5,406.8 119.2,401.7 253.2,401.7 270.0,395.6 320.2,395.6 337.0,390.8 437.5,390.8 454.2,520.5 504.5,520.5 521.2,532.0 538.0,532.0 554.8,536.7 705.5,536.7 722.2,488.1 822.8,488.1 839.5,483.1 1074.0,483.1 1090.8,520.5 1208.0,520.5 1224.8,525.8 1241.5,525.8" fill="none" stroke="#8c0000" stroke-width="4" stroke-linejoin="round" /><circle cx="1090.5" cy="521" r="15.5" fill="none" stroke="#ff0000" stroke-width="2"/></g><line x1="1006.5" y1="125" x2="1006.5" y2="186" stroke="#22b022" stroke-width="1.5"/><line x1="1090.5" y1="125" x2="1090.5" y2="186" stroke="#ff1010" stroke-width="1.5" stroke-dasharray="4 3"/><line x1="1241.8" y1="125" x2="1241.8" y2="186" stroke="#ff1010" stroke-width="1.5"/><line x1="1006.5" y1="220" x2="1006.5" y2="342" stroke="#22b022" stroke-width="1.5"/><line x1="1090.5" y1="220" x2="1090.5" y2="342" stroke="#ff1010" stroke-width="1.5" stroke-dasharray="4 3"/><line x1="1241.8" y1="220" x2="1241.8" y2="342" stroke="#ff1010" stroke-width="1.5"/><line x1="1006.5" y1="376" x2="1006.5" y2="551" stroke="#22b022" stroke-width="1.5"/><line x1="1090.5" y1="376" x2="1090.5" y2="551" stroke="#ff1010" stroke-width="1.5" stroke-dasharray="4 3"/><line x1="1241.8" y1="376" x2="1241.8" y2="551" stroke="#ff1010" stroke-width="1.5"/><g clip-path="url(#c4)"><rect x="77.4" y="865" width="318.2" height="19" fill="url(#hr)"/><rect x="395.6" y="865" width="201.0" height="19" fill="url(#hg)"/><rect x="596.6" y="865" width="301.5" height="19" fill="url(#hr)"/><rect x="898.1" y="865" width="50.2" height="19" fill="url(#hg)"/><rect x="948.4" y="865" width="50.2" height="19" fill="url(#hr)"/><rect x="998.6" y="865" width="234.5" height="19" fill="url(#hg)"/><rect x="1233.1" y="865" width="22.4" height="19" fill="url(#hr)"/><line x1="44" y1="870.5" x2="76" y2="870.5" stroke="#f0e000" stroke-width="2"/><line x1="44" y1="880.5" x2="76" y2="880.5" stroke="#f0e000" stroke-width="2"/><clipPath id="cb"><rect x="44" y="865" width="1810" height="19"/></clipPath><g clip-path="url(#cb)"><circle cx="58.75" cy="871" r="7" fill="none" stroke="#1818d8" stroke-width="1.5"/><path d="M54.75 872 q4 4 8 0" stroke="#1818d8" stroke-width="1.3" fill="none"/><circle cx="233.75" cy="871" r="7" fill="none" stroke="#1818d8" stroke-width="1.5"/><path d="M229.75 875 q4 -4 8 0" stroke="#1818d8" stroke-width="1.3" fill="none"/><circle cx="493.3" cy="871" r="7" fill="none" stroke="#1818d8" stroke-width="1.5"/><path d="M489.3 872 q4 4 8 0" stroke="#1818d8" stroke-width="1.3" fill="none"/><circle cx="745" cy="871" r="7" fill="none" stroke="#1818d8" stroke-width="1.5"/><path d="M741 875 q4 -4 8 0" stroke="#1818d8" stroke-width="1.3" fill="none"/><circle cx="921" cy="871" r="7" fill="none" stroke="#1818d8" stroke-width="1.5"/><path d="M917 872 q4 4 8 0" stroke="#1818d8" stroke-width="1.3" fill="none"/><circle cx="971.7" cy="871" r="7" fill="none" stroke="#1818d8" stroke-width="1.5"/><path d="M967.7 875 q4 -4 8 0" stroke="#1818d8" stroke-width="1.3" fill="none"/><circle cx="1113.3" cy="871" r="7" fill="none" stroke="#1818d8" stroke-width="1.5"/><path d="M1109.3 872 q4 4 8 0" stroke="#1818d8" stroke-width="1.3" fill="none"/><circle cx="1243.3" cy="871" r="7" fill="none" stroke="#1818d8" stroke-width="1.5"/><path d="M1239.3 875 q4 -4 8 0" stroke="#1818d8" stroke-width="1.3" fill="none"/></g><line x1="52.2" y1="711.5" x2="52.2" y2="730.8" stroke="#ff6a20" stroke-width="1.5"/><rect x="45.5" y="720.0" width="13.6" height="8.4" fill="#ff6a20"/><line x1="69.0" y1="685.0" x2="69.0" y2="717.5" stroke="#98b0d0" stroke-width="1.5"/><rect x="63.0" y="701.2" width="12" height="3.8" fill="#000" stroke="#98b0d0" stroke-width="1.4"/><line x1="85.8" y1="701.2" x2="85.8" y2="748.8" stroke="#ff6a20" stroke-width="1.5"/><rect x="79.0" y="701.2" width="13.6" height="38.5" fill="#ff6a20"/><line x1="102.5" y1="727.2" x2="102.5" y2="752.5" stroke="#98b0d0" stroke-width="1.5"/><rect x="96.5" y="731.5" width="12" height="9.6" fill="#000" stroke="#98b0d0" stroke-width="1.4"/><line x1="119.2" y1="731.5" x2="119.2" y2="745.2" stroke="#ff6a20" stroke-width="1.5"/><rect x="112.5" y="731.5" width="13.6" height="3.4" fill="#ff6a20"/><line x1="136.0" y1="706.0" x2="136.0" y2="741.0" stroke="#98b0d0" stroke-width="1.5"/><rect x="130.0" y="714.0" width="12" height="15.6" fill="#000" stroke="#98b0d0" stroke-width="1.4"/><line x1="152.8" y1="692.3" x2="152.8" y2="716.4" stroke="#98b0d0" stroke-width="1.5"/><rect x="146.8" y="697.8" width="12" height="16.9" fill="#000" stroke="#98b0d0" stroke-width="1.4"/><line x1="169.5" y1="689.9" x2="169.5" y2="701.2" stroke="#98b0d0" stroke-width="1.5"/><rect x="163.5" y="694.0" width="12" height="4.3" fill="#000" stroke="#98b0d0" stroke-width="1.4"/><line x1="186.2" y1="674.2" x2="186.2" y2="697.1" stroke="#98b0d0" stroke-width="1.5"/><rect x="180.2" y="686.3" width="12" height="8.4" fill="#000" stroke="#98b0d0" stroke-width="1.4"/><line x1="203.0" y1="709.8" x2="203.0" y2="741.6" stroke="#ff6a20" stroke-width="1.5"/><rect x="196.2" y="710.8" width="13.6" height="29.6" fill="#ff6a20"/><line x1="219.8" y1="726.0" x2="219.8" y2="744.0" stroke="#ff6a20" stroke-width="1.5"/><rect x="212.9" y="741.1" width="13.6" height="1.5" fill="#ff6a20"/><line x1="236.5" y1="741.2" x2="236.5" y2="761.3" stroke="#ff6a20" stroke-width="1.5"/><rect x="229.7" y="742.1" width="13.6" height="17.6" fill="#ff6a20"/><line x1="253.2" y1="735.6" x2="253.2" y2="760.9" stroke="#98b0d0" stroke-width="1.5"/><rect x="247.2" y="740.4" width="12" height="20.0" fill="#000" stroke="#98b0d0" stroke-width="1.4"/><line x1="270.0" y1="727.0" x2="270.0" y2="757.0" stroke="#98b0d0" stroke-width="1.5"/><rect x="264.0" y="730.0" width="12" height="17.0" fill="#000" stroke="#98b0d0" stroke-width="1.4"/><line x1="286.8" y1="717.0" x2="286.8" y2="746.4" stroke="#ff6a20" stroke-width="1.5"/><rect x="279.9" y="730.0" width="13.6" height="9.7" fill="#ff6a20"/><line x1="303.5" y1="739.2" x2="303.5" y2="764.5" stroke="#ff6a20" stroke-width="1.5"/><rect x="296.7" y="739.7" width="13.6" height="23.6" fill="#ff6a20"/><line x1="320.2" y1="753.7" x2="320.2" y2="779.0" stroke="#ff6a20" stroke-width="1.5"/><rect x="313.4" y="763.8" width="13.6" height="14.4" fill="#ff6a20"/><line x1="337.0" y1="724.8" x2="337.0" y2="763.3" stroke="#98b0d0" stroke-width="1.5"/><rect x="331.0" y="729.1" width="12" height="22.6" fill="#000" stroke="#98b0d0" stroke-width="1.4"/><line x1="353.8" y1="721.0" x2="353.8" y2="734.4" stroke="#ff6a20" stroke-width="1.5"/><rect x="346.9" y="727.2" width="13.6" height="1.5" fill="#ff6a20"/><line x1="370.5" y1="700.2" x2="370.5" y2="729.6" stroke="#98b0d0" stroke-width="1.5"/><rect x="364.5" y="702.6" width="12" height="27.0" fill="#000" stroke="#98b0d0" stroke-width="1.4"/><line x1="387.2" y1="701.2" x2="387.2" y2="715.6" stroke="#ff6a20" stroke-width="1.5"/><rect x="380.4" y="702.6" width="13.6" height="9.7" fill="#ff6a20"/><line x1="404.0" y1="639.3" x2="404.0" y2="673.0" stroke="#98b0d0" stroke-width="1.5"/><rect x="398.0" y="639.3" width="12" height="33.7" fill="#000" stroke="#98b0d0" stroke-width="1.4"/><line x1="420.8" y1="636.2" x2="420.8" y2="647.8" stroke="#ff6a20" stroke-width="1.5"/><rect x="413.9" y="639.3" width="13.6" height="6.5" fill="#ff6a20"/><line x1="437.5" y1="637.7" x2="437.5" y2="661.0" stroke="#98b0d0" stroke-width="1.5"/><rect x="431.5" y="640.5" width="12" height="6.8" fill="#000" stroke="#98b0d0" stroke-width="1.4"/><line x1="454.2" y1="632.8" x2="454.2" y2="650.6" stroke="#98b0d0" stroke-width="1.5"/><rect x="448.2" y="634.0" width="12" height="6.5" fill="#000" stroke="#98b0d0" stroke-width="1.4"/><line x1="471.0" y1="653.8" x2="471.0" y2="679.5" stroke="#ff6a20" stroke-width="1.5"/><rect x="464.2" y="666.5" width="13.6" height="13.0" fill="#ff6a20"/><line x1="487.8" y1="647.8" x2="487.8" y2="681.0" stroke="#98b0d0" stroke-width="1.5"/><rect x="481.8" y="653.0" width="12" height="28.0" fill="#000" stroke="#98b0d0" stroke-width="1.4"/><line x1="504.5" y1="637.0" x2="504.5" y2="653.0" stroke="#98b0d0" stroke-width="1.5"/><rect x="498.5" y="637.0" width="12" height="16.0" fill="#000" stroke="#98b0d0" stroke-width="1.4"/><line x1="521.2" y1="623.7" x2="521.2" y2="644.9" stroke="#ff6a20" stroke-width="1.5"/><rect x="514.5" y="637.0" width="13.6" height="2.3" fill="#ff6a20"/><line x1="538.0" y1="628.5" x2="538.0" y2="665.8" stroke="#ff6a20" stroke-width="1.5"/><rect x="532.0" y="645.4" width="12" height="4.8" fill="#000" stroke="#ff6a20" stroke-width="1.4"/><line x1="554.8" y1="641.0" x2="554.8" y2="661.0" stroke="#ff6a20" stroke-width="1.5"/><rect x="548.0" y="645.4" width="13.6" height="6.0" fill="#ff6a20"/><line x1="571.5" y1="649.0" x2="571.5" y2="669.4" stroke="#ff6a20" stroke-width="1.5"/><rect x="564.7" y="651.4" width="13.6" height="13.2" fill="#ff6a20"/><line x1="588.2" y1="657.4" x2="588.2" y2="670.6" stroke="#ff6a20" stroke-width="1.5"/><rect x="581.5" y="665.0" width="13.6" height="2.5" fill="#ff6a20"/><line x1="605.0" y1="694.0" x2="605.0" y2="721.9" stroke="#ff6a20" stroke-width="1.5"/><rect x="598.2" y="695.9" width="13.6" height="17.3" fill="#ff6a20"/><line x1="621.8" y1="712.5" x2="621.8" y2="732.0" stroke="#ff6a20" stroke-width="1.5"/><rect x="615.0" y="714.0" width="13.6" height="18.0" fill="#ff6a20"/><line x1="638.5" y1="729.0" x2="638.5" y2="742.0" stroke="#ff6a20" stroke-width="1.5"/><rect x="631.7" y="733.2" width="13.6" height="6.0" fill="#ff6a20"/><line x1="655.2" y1="735.6" x2="655.2" y2="751.7" stroke="#98b0d0" stroke-width="1.5"/><rect x="649.2" y="739.2" width="12" height="1.9" fill="#000" stroke="#98b0d0" stroke-width="1.4"/><line x1="672.0" y1="729.6" x2="672.0" y2="760.9" stroke="#ff6a20" stroke-width="1.5"/><rect x="665.2" y="731.5" width="13.6" height="25.8" fill="#ff6a20"/><line x1="688.8" y1="748.8" x2="688.8" y2="769.3" stroke="#ff6a20" stroke-width="1.5"/><rect x="682.0" y="758.0" width="13.6" height="11.3" fill="#ff6a20"/><line x1="705.5" y1="743.5" x2="705.5" y2="774.8" stroke="#98b0d0" stroke-width="1.5"/><rect x="699.5" y="755.6" width="12" height="14.9" fill="#000" stroke="#98b0d0" stroke-width="1.4"/><line x1="722.2" y1="746.4" x2="722.2" y2="758.5" stroke="#ff6a20" stroke-width="1.5"/><rect x="715.5" y="755.6" width="13.6" height="2.9" fill="#ff6a20"/><line x1="739.0" y1="766.2" x2="739.0" y2="786.9" stroke="#ff6a20" stroke-width="1.5"/><rect x="732.2" y="771.0" width="13.6" height="4.8" fill="#ff6a20"/><line x1="755.8" y1="737.3" x2="755.8" y2="777.2" stroke="#98b0d0" stroke-width="1.5"/><rect x="749.8" y="744.0" width="12" height="33.2" fill="#000" stroke="#98b0d0" stroke-width="1.4"/><line x1="772.5" y1="742.0" x2="772.5" y2="779.0" stroke="#ff6a20" stroke-width="1.5"/><rect x="765.7" y="743.5" width="13.6" height="33.7" fill="#ff6a20"/><line x1="789.2" y1="771.0" x2="789.2" y2="789.3" stroke="#98b0d0" stroke-width="1.5"/><rect x="783.2" y="775.3" width="12" height="2.4" fill="#000" stroke="#98b0d0" stroke-width="1.4"/><line x1="806.0" y1="759.7" x2="806.0" y2="785.4" stroke="#98b0d0" stroke-width="1.5"/><rect x="800.0" y="771.0" width="12" height="2.4" fill="#000" stroke="#98b0d0" stroke-width="1.4"/><line x1="822.8" y1="759.7" x2="822.8" y2="774.8" stroke="#98b0d0" stroke-width="1.5"/><rect x="816.8" y="769.3" width="12" height="5.5" fill="#000" stroke="#98b0d0" stroke-width="1.4"/><line x1="839.5" y1="762.0" x2="839.5" y2="778.2" stroke="#ff6a20" stroke-width="1.5"/><rect x="832.7" y="769.3" width="13.6" height="5.5" fill="#ff6a20"/><line x1="856.2" y1="771.0" x2="856.2" y2="783.0" stroke="#ff6a20" stroke-width="1.5"/><rect x="849.5" y="775.3" width="13.6" height="6.7" fill="#ff6a20"/><line x1="873.0" y1="795.0" x2="873.0" y2="840.8" stroke="#ff6a20" stroke-width="1.5"/><rect x="867.0" y="803.7" width="12" height="30.6" fill="#000" stroke="#ff6a20" stroke-width="1.4"/><line x1="889.8" y1="721.2" x2="889.8" y2="804.2" stroke="#98b0d0" stroke-width="1.5"/><rect x="883.8" y="739.2" width="12" height="65.0" fill="#000" stroke="#98b0d0" stroke-width="1.4"/><line x1="906.5" y1="709.8" x2="906.5" y2="739.2" stroke="#98b0d0" stroke-width="1.5"/><rect x="900.5" y="711.5" width="12" height="27.7" fill="#000" stroke="#98b0d0" stroke-width="1.4"/><line x1="923.2" y1="706.0" x2="923.2" y2="723.6" stroke="#ff6a20" stroke-width="1.5"/><rect x="916.5" y="711.6" width="13.6" height="5.5" fill="#ff6a20"/><line x1="940.0" y1="687.5" x2="940.0" y2="755.6" stroke="#ff6a20" stroke-width="1.5"/><rect x="933.2" y="700.3" width="13.6" height="44.2" fill="#ff6a20"/><line x1="956.8" y1="735.0" x2="956.8" y2="769.3" stroke="#ff6a20" stroke-width="1.5"/><rect x="950.0" y="745.3" width="13.6" height="18.0" fill="#ff6a20"/><line x1="973.5" y1="757.3" x2="973.5" y2="775.8" stroke="#ff6a20" stroke-width="1.5"/><rect x="966.7" y="763.8" width="13.6" height="5.5" fill="#ff6a20"/><line x1="990.2" y1="763.3" x2="990.2" y2="779.7" stroke="#ff6a20" stroke-width="1.5"/><rect x="983.5" y="770.0" width="13.6" height="4.9" fill="#ff6a20"/><line x1="1007.0" y1="721.2" x2="1007.0" y2="732.0" stroke="#98b0d0" stroke-width="1.5"/><rect x="1001.0" y="721.2" width="12" height="10.8" fill="#000" stroke="#98b0d0" stroke-width="1.4"/><line x1="1023.8" y1="706.0" x2="1023.8" y2="727.2" stroke="#98b0d0" stroke-width="1.5"/><rect x="1017.8" y="714.0" width="12" height="7.9" fill="#000" stroke="#98b0d0" stroke-width="1.4"/><line x1="1040.5" y1="703.6" x2="1040.5" y2="717.1" stroke="#98b0d0" stroke-width="1.5"/><rect x="1034.5" y="711.6" width="12" height="3.1" fill="#000" stroke="#98b0d0" stroke-width="1.4"/><line x1="1057.2" y1="705.6" x2="1057.2" y2="716.4" stroke="#ff6a20" stroke-width="1.5"/><rect x="1050.5" y="710.0" width="13.6" height="1.5" fill="#ff6a20"/><line x1="1074.0" y1="651.4" x2="1074.0" y2="682.0" stroke="#98b0d0" stroke-width="1.5"/><rect x="1068.0" y="653.8" width="12" height="24.1" fill="#8aa6c8" stroke="#98b0d0" stroke-width="1.5"/><line x1="1090.8" y1="675.5" x2="1090.8" y2="704.0" stroke="#ff6a20" stroke-width="1.5"/><rect x="1084.0" y="678.6" width="13.6" height="7.2" fill="#ff6a20"/><line x1="1107.5" y1="672.3" x2="1107.5" y2="702.7" stroke="#ff6a20" stroke-width="1.5"/><rect x="1100.7" y="685.8" width="13.6" height="7.7" fill="#ff6a20"/><line x1="1124.2" y1="681.0" x2="1124.2" y2="701.2" stroke="#98b0d0" stroke-width="1.5"/><rect x="1118.2" y="681.0" width="12" height="13.7" fill="#000" stroke="#98b0d0" stroke-width="1.4"/><line x1="1141.0" y1="676.2" x2="1141.0" y2="703.1" stroke="#ff6a20" stroke-width="1.5"/><rect x="1135.0" y="691.6" width="12" height="5.5" fill="#000" stroke="#ff6a20" stroke-width="1.4"/><line x1="1157.8" y1="683.4" x2="1157.8" y2="710.4" stroke="#ff6a20" stroke-width="1.5"/><rect x="1151.0" y="691.6" width="13.6" height="16.8" fill="#ff6a20"/><line x1="1174.5" y1="700.3" x2="1174.5" y2="720.0" stroke="#ff6a20" stroke-width="1.5"/><rect x="1167.7" y="707.5" width="13.6" height="1.7" fill="#ff6a20"/><line x1="1191.2" y1="698.3" x2="1191.2" y2="710.4" stroke="#98b0d0" stroke-width="1.5"/><rect x="1185.2" y="700.3" width="12" height="8.9" fill="#000" stroke="#98b0d0" stroke-width="1.4"/><line x1="1208.0" y1="671.4" x2="1208.0" y2="709.9" stroke="#98b0d0" stroke-width="1.5"/><rect x="1202.0" y="676.2" width="12" height="28.1" fill="#000" stroke="#98b0d0" stroke-width="1.4"/><line x1="1224.8" y1="674.3" x2="1224.8" y2="708.4" stroke="#ff6a20" stroke-width="1.5"/><rect x="1218.0" y="676.2" width="13.6" height="26.9" fill="#ff6a20"/><line x1="1241.5" y1="703.6" x2="1241.5" y2="722.4" stroke="#ff6a20" stroke-width="1.5"/><rect x="1234.7" y="703.6" width="13.6" height="18.8" fill="#ff6a20"/><polyline points="44.0,717.5 52.2,721.2 69.0,682.7 85.8,737.3 102.5,720.0 119.2,726.0 136.0,694.7 152.8,681.5 169.5,682.7 186.2,674.2 203.0,748.8 219.8,741.1 236.5,756.0 253.2,726.0 270.0,717.0 286.8,729.6 303.5,763.3 320.2,775.3 337.0,705.0 353.8,712.7 370.5,682.7 387.2,702.6 404.0,608.0 420.8,632.8 437.5,631.4 454.2,625.6 471.0,686.3 487.8,642.5 504.5,620.0 521.2,627.3 538.0,638.0 554.8,646.6 571.5,661.0 588.2,661.7 605.0,723.6 621.8,734.0 638.5,736.3 655.2,732.5 672.0,750.0 688.8,768.1 705.5,742.8 722.2,746.0 739.0,771.7 755.8,726.7 772.5,772.9 789.2,767.6 806.0,762.0 822.8,756.5 839.5,769.3 856.2,780.1 873.0,804.2 889.8,705.0 906.5,681.5 923.2,700.7 940.0,724.8 956.8,758.5 973.5,760.4 990.2,762.8 1007.0,691.6 1023.8,697.8 1040.5,699.5 1057.2,703.6 1074.0,659.3 1090.8,677.1 1107.5,684.4 1124.2,669.0 1141.0,681.5 1157.8,703.6 1174.5,703.6 1191.2,688.2 1208.0,659.3 1224.8,695.9 1241.5,721.2" fill="none" stroke="#ff1010" stroke-width="1.3" stroke-linejoin="round" /><polyline points="44.0,739.0 52.2,741.6 69.0,703.0 85.8,760.4 102.5,745.2 119.2,747.6 136.0,720.0 152.8,700.7 169.5,697.8 186.2,693.0 203.0,768.6 219.8,758.5 236.5,775.3 253.2,744.0 270.0,734.4 286.8,748.8 303.5,782.5 320.2,795.8 337.0,726.7 353.8,730.0 370.5,704.3 387.2,723.6 404.0,625.6 420.8,650.2 437.5,645.8 454.2,641.7 471.0,701.2 487.8,659.8 504.5,639.3 521.2,646.6 538.0,659.3 554.8,664.6 571.5,680.3 588.2,679.0 605.0,739.2 621.8,751.3 638.5,753.2 655.2,748.8 672.0,770.5 688.8,783.7 705.5,762.8 722.2,765.7 739.0,789.8 755.8,746.4 772.5,794.0 789.2,788.6 806.0,785.0 822.8,774.8 839.5,783.7 856.2,792.2 873.0,823.0 889.8,734.4 906.5,712.7 923.2,729.1 940.0,773.0 956.8,787.9 973.5,786.2 990.2,789.3 1007.0,710.4 1023.8,713.3 1040.5,715.2 1057.2,718.1 1074.0,673.0 1090.8,694.0 1107.5,704.3 1124.2,691.1 1141.0,704.3 1157.8,723.6 1174.5,721.2 1191.2,702.0 1208.0,676.2 1224.8,716.4 1241.5,741.2" fill="none" stroke="#109810" stroke-width="1.3" stroke-linejoin="round" /><line x1="1006.5" y1="584" x2="1006.5" y2="865" stroke="#22b022" stroke-width="1.5"/><line x1="1090.5" y1="584" x2="1090.5" y2="865" stroke="#ff1010" stroke-width="1.5" stroke-dasharray="4 3"/><line x1="1241.8" y1="584" x2="1241.8" y2="865" stroke="#ff1010" stroke-width="1.5"/><path d="M1001 826 v-17 h-9 l13 -11 l13 11 h-9 v17z" fill="#0c980c"/><path d="M1087 617 h7 v12.5 h5.5 l-9.5 11 l-9.5 -11 h6.5z" fill="#ff1010"/><path d="M1236.5 610 h9 v16 h6.5 l-11.5 13.5 l-11.5 -13.5 h7.5z" fill="#ff1010"/></g><line x1="1854.5" y1="125" x2="1854.5" y2="186" stroke="#ffffff" stroke-width="1.5"/><line x1="1854" y1="129.3" x2="1866" y2="129.3" stroke="#ffffff" stroke-width="1.5"/><line x1="1854" y1="155.6" x2="1866" y2="155.6" stroke="#ffffff" stroke-width="1.5"/><line x1="1854" y1="181.7" x2="1866" y2="181.7" stroke="#ffffff" stroke-width="1.5"/><line x1="1854" y1="142.5" x2="1860" y2="142.5" stroke="#ffffff" stroke-width="1.3"/><line x1="1854" y1="168.6" x2="1860" y2="168.6" stroke="#ffffff" stroke-width="1.3"/><text x="1912" y="162.5" text-anchor="end" font-size="15" font-family="Liberation Sans" fill="#f0f0e0">0</text><line x1="1854.5" y1="220" x2="1854.5" y2="342" stroke="#ffffff" stroke-width="1.5"/><line x1="1854" y1="229.9" x2="1866" y2="229.9" stroke="#ffffff" stroke-width="1.5"/><line x1="1854" y1="247.15" x2="1866" y2="247.15" stroke="#ffffff" stroke-width="1.5"/><line x1="1854" y1="264.4" x2="1866" y2="264.4" stroke="#ffffff" stroke-width="1.5"/><line x1="1854" y1="281.65" x2="1866" y2="281.65" stroke="#ffffff" stroke-width="1.5"/><line x1="1854" y1="298.9" x2="1866" y2="298.9" stroke="#ffffff" stroke-width="1.5"/><line x1="1854" y1="316.15" x2="1866" y2="316.15" stroke="#ffffff" stroke-width="1.5"/><line x1="1854" y1="333.4" x2="1866" y2="333.4" stroke="#ffffff" stroke-width="1.5"/><line x1="1854" y1="222.9" x2="1860" y2="222.9" stroke="#ffffff" stroke-width="1.3"/><line x1="1854" y1="226.4" x2="1860" y2="226.4" stroke="#ffffff" stroke-width="1.3"/><line x1="1854" y1="233.35" x2="1860" y2="233.35" stroke="#ffffff" stroke-width="1.3"/><line x1="1854" y1="236.8" x2="1860" y2="236.8" stroke="#ffffff" stroke-width="1.3"/><line x1="1854" y1="240.25" x2="1860" y2="240.25" stroke="#ffffff" stroke-width="1.3"/><line x1="1854" y1="243.70000000000002" x2="1860" y2="243.70000000000002" stroke="#ffffff" stroke-width="1.3"/><line x1="1854" y1="250.60000000000002" x2="1860" y2="250.60000000000002" stroke="#ffffff" stroke-width="1.3"/><line x1="1854" y1="254.05" x2="1860" y2="254.05" stroke="#ffffff" stroke-width="1.3"/><line x1="1854" y1="257.5" x2="1860" y2="257.5" stroke="#ffffff" stroke-width="1.3"/><line x1="1854" y1="260.95" x2="1860" y2="260.95" stroke="#ffffff" stroke-width="1.3"/><line x1="1854" y1="267.85" x2="1860" y2="267.85" stroke="#ffffff" stroke-width="1.3"/><line x1="1854" y1="271.3" x2="1860" y2="271.3" stroke="#ffffff" stroke-width="1.3"/><line x1="1854" y1="274.75" x2="1860" y2="274.75" stroke="#ffffff" stroke-width="1.3"/><line x1="1854" y1="278.2" x2="1860" y2="278.2" stroke="#ffffff" stroke-width="1.3"/><line x1="1854" y1="285.1" x2="1860" y2="285.1" stroke="#ffffff" stroke-width="1.3"/><line x1="1854" y1="288.55" x2="1860" y2="288.55" stroke="#ffffff" stroke-width="1.3"/><line x1="1854" y1="292.0" x2="1860" y2="292.0" stroke="#ffffff" stroke-width="1.3"/><line x1="1854" y1="295.45" x2="1860" y2="295.45" stroke="#ffffff" stroke-width="1.3"/><line x1="1854" y1="302.35" x2="1860" y2="302.35" stroke="#ffffff" stroke-width="1.3"/><line x1="1854" y1="305.8" x2="1860" y2="305.8" stroke="#ffffff" stroke-width="1.3"/><line x1="1854" y1="309.25" x2="1860" y2="309.25" stroke="#ffffff" stroke-width="1.3"/><line x1="1854" y1="312.70000000000005" x2="1860" y2="312.70000000000005" stroke="#ffffff" stroke-width="1.3"/><line x1="1854" y1="319.6" x2="1860" y2="319.6" stroke="#ffffff" stroke-width="1.3"/><line x1="1854" y1="323.05" x2="1860" y2="323.05" stroke="#ffffff" stroke-width="1.3"/><line x1="1854" y1="326.5" x2="1860" y2="326.5" stroke="#ffffff" stroke-width="1.3"/><line x1="1854" y1="329.95000000000005" x2="1860" y2="329.95000000000005" stroke="#ffffff" stroke-width="1.3"/><line x1="1854" y1="336.85" x2="1860" y2="336.85" stroke="#ffffff" stroke-width="1.3"/><line x1="1854" y1="340.3" x2="1860" y2="340.3" stroke="#ffffff" stroke-width="1.3"/><text x="1912" y="235.9" text-anchor="end" font-size="15" font-family="Liberation Sans" fill="#f0f0f0">1500</text><text x="1912" y="253.3" text-anchor="end" font-size="15" font-family="Liberation Sans" fill="#f0f0f0">1000</text><text x="1912" y="270.5" text-anchor="end" font-size="15" font-family="Liberation Sans" fill="#f0f0f0">500</text><text x="1912" y="288.5" text-anchor="end" font-size="15" font-family="Liberation Sans" fill="#f0f0f0">0</text><text x="1912" y="305.0" text-anchor="end" font-size="15" font-family="Liberation Sans" fill="#f0f0f0">-500</text><text x="1912" y="322.3" text-anchor="end" font-size="15" font-family="Liberation Sans" fill="#f0f0f0">-1000</text><text x="1912" y="339.4" text-anchor="end" font-size="15" font-family="Liberation Sans" fill="#f0f0f0">-1500</text><line x1="1854.5" y1="376" x2="1854.5" y2="551" stroke="#ffffff" stroke-width="1.5"/><line x1="1854" y1="390" x2="1866" y2="390" stroke="#ffffff" stroke-width="1.5"/><line x1="1854" y1="444.3" x2="1866" y2="444.3" stroke="#ffffff" stroke-width="1.5"/><line x1="1854" y1="499.3" x2="1866" y2="499.3" stroke="#ffffff" stroke-width="1.5"/><line x1="1854" y1="379.3" x2="1860" y2="379.3" stroke="#ffffff" stroke-width="1.3"/><line x1="1854" y1="401.7" x2="1860" y2="401.7" stroke="#ffffff" stroke-width="1.3"/><line x1="1854" y1="412.5" x2="1860" y2="412.5" stroke="#ffffff" stroke-width="1.3"/><line x1="1854" y1="423.3" x2="1860" y2="423.3" stroke="#ffffff" stroke-width="1.3"/><line x1="1854" y1="434.3" x2="1860" y2="434.3" stroke="#ffffff" stroke-width="1.3"/><line x1="1854" y1="455" x2="1860" y2="455" stroke="#ffffff" stroke-width="1.3"/><line x1="1854" y1="466" x2="1860" y2="466" stroke="#ffffff" stroke-width="1.3"/><line x1="1854" y1="476.7" x2="1860" y2="476.7" stroke="#ffffff" stroke-width="1.3"/><line x1="1854" y1="487.7" x2="1860" y2="487.7" stroke="#ffffff" stroke-width="1.3"/><line x1="1854" y1="510" x2="1860" y2="510" stroke="#ffffff" stroke-width="1.3"/><line x1="1854" y1="521" x2="1860" y2="521" stroke="#ffffff" stroke-width="1.3"/><line x1="1854" y1="531.7" x2="1860" y2="531.7" stroke="#ffffff" stroke-width="1.3"/><line x1="1854" y1="541.7" x2="1860" y2="541.7" stroke="#ffffff" stroke-width="1.3"/><text x="1912" y="397.5" text-anchor="end" font-size="15" font-family="Liberation Sans" fill="#f0f0f0">100</text><text x="1912" y="451.5" text-anchor="end" font-size="15" font-family="Liberation Sans" fill="#f0f0f0">50</text><text x="1912" y="505.5" text-anchor="end" font-size="15" font-family="Liberation Sans" fill="#f0f0f0">0</text><line x1="1854.5" y1="584" x2="1854.5" y2="864" stroke="#ffffff" stroke-width="1.5"/><line x1="1854" y1="585.7" x2="1866" y2="585.7" stroke="#ffffff" stroke-width="1.5"/><line x1="1854" y1="621" x2="1866" y2="621" stroke="#ffffff" stroke-width="1.5"/><line x1="1854" y1="655.8" x2="1866" y2="655.8" stroke="#ffffff" stroke-width="1.5"/><line x1="1854" y1="690.5" x2="1866" y2="690.5" stroke="#ffffff" stroke-width="1.5"/><line x1="1854" y1="725.3" x2="1866" y2="725.3" stroke="#ffffff" stroke-width="1.5"/><line x1="1854" y1="760" x2="1866" y2="760" stroke="#ffffff" stroke-width="1.5"/><line x1="1854" y1="794.8" x2="1866" y2="794.8" stroke="#ffffff" stroke-width="1.5"/><line x1="1854" y1="829.5" x2="1866" y2="829.5" stroke="#ffffff" stroke-width="1.5"/><line x1="1854" y1="863.3" x2="1866" y2="863.3" stroke="#ffffff" stroke-width="1.5"/><line x1="1854" y1="592.76" x2="1860" y2="592.76" stroke="#ffffff" stroke-width="1.3"/><line x1="1854" y1="599.82" x2="1860" y2="599.82" stroke="#ffffff" stroke-width="1.3"/><line x1="1854" y1="606.88" x2="1860" y2="606.88" stroke="#ffffff" stroke-width="1.3"/><line x1="1854" y1="613.94" x2="1860" y2="613.94" stroke="#ffffff" stroke-width="1.3"/><line x1="1854" y1="627.96" x2="1860" y2="627.96" stroke="#ffffff" stroke-width="1.3"/><line x1="1854" y1="634.92" x2="1860" y2="634.92" stroke="#ffffff" stroke-width="1.3"/><line x1="1854" y1="641.88" x2="1860" y2="641.88" stroke="#ffffff" stroke-width="1.3"/><line x1="1854" y1="648.8399999999999" x2="1860" y2="648.8399999999999" stroke="#ffffff" stroke-width="1.3"/><line x1="1854" y1="662.74" x2="1860" y2="662.74" stroke="#ffffff" stroke-width="1.3"/><line x1="1854" y1="669.68" x2="1860" y2="669.68" stroke="#ffffff" stroke-width="1.3"/><line x1="1854" y1="676.62" x2="1860" y2="676.62" stroke="#ffffff" stroke-width="1.3"/><line x1="1854" y1="683.56" x2="1860" y2="683.56" stroke="#ffffff" stroke-width="1.3"/><line x1="1854" y1="697.46" x2="1860" y2="697.46" stroke="#ffffff" stroke-width="1.3"/><line x1="1854" y1="704.42" x2="1860" y2="704.42" stroke="#ffffff" stroke-width="1.3"/><line x1="1854" y1="711.38" x2="1860" y2="711.38" stroke="#ffffff" stroke-width="1.3"/><line x1="1854" y1="718.3399999999999" x2="1860" y2="718.3399999999999" stroke="#ffffff" stroke-width="1.3"/><line x1="1854" y1="732.24" x2="1860" y2="732.24" stroke="#ffffff" stroke-width="1.3"/><line x1="1854" y1="739.18" x2="1860" y2="739.18" stroke="#ffffff" stroke-width="1.3"/><line x1="1854" y1="746.12" x2="1860" y2="746.12" stroke="#ffffff" stroke-width="1.3"/><line x1="1854" y1="753.06" x2="1860" y2="753.06" stroke="#ffffff" stroke-width="1.3"/><line x1="1854" y1="766.96" x2="1860" y2="766.96" stroke="#ffffff" stroke-width="1.3"/><line x1="1854" y1="773.92" x2="1860" y2="773.92" stroke="#ffffff" stroke-width="1.3"/><line x1="1854" y1="780.88" x2="1860" y2="780.88" stroke="#ffffff" stroke-width="1.3"/><line x1="1854" y1="787.8399999999999" x2="1860" y2="787.8399999999999" stroke="#ffffff" stroke-width="1.3"/><line x1="1854" y1="801.74" x2="1860" y2="801.74" stroke="#ffffff" stroke-width="1.3"/><line x1="1854" y1="808.68" x2="1860" y2="808.68" stroke="#ffffff" stroke-width="1.3"/><line x1="1854" y1="815.62" x2="1860" y2="815.62" stroke="#ffffff" stroke-width="1.3"/><line x1="1854" y1="822.56" x2="1860" y2="822.56" stroke="#ffffff" stroke-width="1.3"/><line x1="1854" y1="836.26" x2="1860" y2="836.26" stroke="#ffffff" stroke-width="1.3"/><line x1="1854" y1="843.02" x2="1860" y2="843.02" stroke="#ffffff" stroke-width="1.3"/><line x1="1854" y1="849.78" x2="1860" y2="849.78" stroke="#ffffff" stroke-width="1.3"/><line x1="1854" y1="856.54" x2="1860" y2="856.54" stroke="#ffffff" stroke-width="1.3"/><text x="1912" y="626.5" text-anchor="end" font-size="15" font-family="Liberation Sans" fill="#f0f0f0">380</text><text x="1912" y="661.5" text-anchor="end" font-size="15" font-family="Liberation Sans" fill="#f0f0f0">375</text><text x="1912" y="696.5" text-anchor="end" font-size="15" font-family="Liberation Sans" fill="#f0f0f0">370</text><text x="1912" y="765.5" text-anchor="end" font-size="15" font-family="Liberation Sans" fill="#f0f0f0">360</text><text x="1912" y="800.5" text-anchor="end" font-size="15" font-family="Liberation Sans" fill="#f0f0f0">355</text><text x="1912" y="835.5" text-anchor="end" font-size="15" font-family="Liberation Sans" fill="#f0f0f0">350</text><rect x="1859.5" y="712.5" width="58" height="21" fill="#000" stroke="#d8d8d8"/><text x="1861" y="728" font-size="14" font-family="Liberation Sans" fill="#ff1010" textLength="56">365.2000</text><rect x="44" y="884" width="1810" height="41" fill="#000"/><line x1="44" y1="884.5" x2="1917" y2="884.5" stroke="#e8e8e8" stroke-width="1.8"/><line x1="44" y1="904.5" x2="1854" y2="904.5" stroke="#e8e8e8" stroke-width="1.8"/><line x1="337" y1="885" x2="337" y2="925" stroke="#e8e8e8" stroke-width="1.8"/><line x1="44" y1="924.2" x2="1854" y2="924.2" stroke="#606060" stroke-width="1.2"/><line x1="673" y1="885" x2="673" y2="904.5" stroke="#e8e8e8" stroke-width="1.8"/><line x1="1007" y1="885" x2="1007" y2="904.5" stroke="#e8e8e8" stroke-width="1.8"/><line x1="1745.5" y1="885" x2="1745.5" y2="904.5" stroke="#e8e8e8" stroke-width="1.8"/><line x1="1779" y1="885" x2="1779" y2="904.5" stroke="#e8e8e8" stroke-width="1.8"/><line x1="1812.5" y1="885" x2="1812.5" y2="904.5" stroke="#e8e8e8" stroke-width="1.8"/><line x1="1846" y1="885" x2="1846" y2="904.5" stroke="#e8e8e8" stroke-width="1.8"/><text x="80" y="900" text-anchor="middle" font-size="15" font-family="Liberation Sans" fill="#f0f0f0">27</text><text x="146" y="900" text-anchor="middle" font-size="15" font-family="Liberation Sans" fill="#f0f0f0">28</text><text x="213" y="900" text-anchor="middle" font-size="15" font-family="Liberation Sans" fill="#f0f0f0">29</text><text x="280" y="900" text-anchor="middle" font-size="15" font-family="Liberation Sans" fill="#f0f0f0">30</text><text x="345.5" y="900" text-anchor="middle" font-size="15" font-family="Liberation Sans" fill="#f0f0f0">3</text><text x="410" y="900" text-anchor="middle" font-size="15" font-family="Liberation Sans" fill="#f0f0f0">4</text><text x="477" y="900" text-anchor="middle" font-size="15" font-family="Liberation Sans" fill="#f0f0f0">5</text><text x="544" y="900" text-anchor="middle" font-size="15" font-family="Liberation Sans" fill="#f0f0f0">6</text><text x="611" y="900" text-anchor="middle" font-size="15" font-family="Liberation Sans" fill="#f0f0f0">7</text><text x="683" y="900" text-anchor="middle" font-size="15" font-family="Liberation Sans" fill="#f0f0f0">10</text><text x="749.5" y="900" text-anchor="middle" font-size="15" font-family="Liberation Sans" fill="#f0f0f0">11</text><text x="816.5" y="900" text-anchor="middle" font-size="15" font-family="Liberation Sans" fill="#f0f0f0">12</text><text x="884" y="900" text-anchor="middle" font-size="15" font-family="Liberation Sans" fill="#f0f0f0">13</text><text x="951" y="900" text-anchor="middle" font-size="15" font-family="Liberation Sans" fill="#f0f0f0">14</text><text x="1017" y="900" text-anchor="middle" font-size="15" font-family="Liberation Sans" fill="#f0f0f0">17</text><text x="1085" y="900" text-anchor="middle" font-size="15" font-family="Liberation Sans" fill="#f0f0f0">18</text><text x="1152" y="900" text-anchor="middle" font-size="15" font-family="Liberation Sans" fill="#f0f0f0">19</text><text x="1218.5" y="900" text-anchor="middle" font-size="15" font-family="Liberation Sans" fill="#f0f0f0">20</text><text x="1335.5" y="900" text-anchor="middle" font-size="15" font-family="Liberation Sans" fill="#f0f0f0">21</text><text x="1537.5" y="900" text-anchor="middle" font-size="15" font-family="Liberation Sans" fill="#f0f0f0">22</text><text x="1755" y="900" text-anchor="middle" font-size="15" font-family="Liberation Sans" fill="#f0f0f0">23</text><text x="1789" y="900" text-anchor="middle" font-size="15" font-family="Liberation Sans" fill="#f0f0f0">23</text><text x="1822.5" y="900" text-anchor="middle" font-size="15" font-family="Liberation Sans" fill="#f0f0f0">23</text><text x="1848" y="900" font-size="15" font-family="Liberation Sans" fill="#f0f0f0">2</text><rect x="1848" y="886" width="6" height="18" fill="#000" opacity="0"/><text x="339" y="919.5" font-size="15" font-family="Liberation Sans" fill="#f0f0f0">October</text></svg>
<div style="position:absolute;left:1854px;top:884px;width:63px;height:42px;background:#dcdcdc"></div>
<div style="position:absolute;left:1856px;top:886px;width:61px;height:39px;background:#e8e8e8;border-top:1px solid #a8a8a8;border-left:1px solid #a8a8a8;box-sizing:border-box"></div>
<div style="position:absolute;left:44px;top:925px;width:1873px;height:30px;background:#efefef;border-top:1px solid #8a8a8a;box-sizing:border-box"></div>
<svg style="position:absolute;left:0;top:0" width="1920" height="1080"><circle cx="1884" cy="903.5" r="9.5" fill="none" stroke="#ff2020" stroke-width="1.5"/><circle cx="1880.5" cy="900.5" r="1.3" fill="#ff2020"/><circle cx="1887.5" cy="900.5" r="1.3" fill="#ff2020"/><path d="M1879 909.5 q5 -6 10 0" stroke="#ff2020" stroke-width="1.4" fill="none"/><rect x="1437" y="936" width="204" height="6" fill="#8a8a8a"/><rect x="1666" y="929" width="1.5" height="21" fill="#9a9a9a"/><rect x="1723" y="929" width="1.5" height="21" fill="#9a9a9a"/><rect x="1838" y="929" width="1.5" height="21" fill="#9a9a9a"/><path d="M1676 935 a7 7 0 0 1 12 -2 l2 -3 v7 h-7 l3 -2 a4.5 4.5 0 0 0 -7 1z M1689 942 a7 7 0 0 1 -12 2 l-2 3 v-7 h7 l-3 2 a4.5 4.5 0 0 0 7 -1z" fill="#555"/><text x="1703" y="945" font-size="15" font-weight="bold" font-family="Liberation Sans" fill="#555">C</text><path d="M1742 930 l4 5 h-2.5 v7 h2.5 l-4 5 l-4 -5 h2.5 v-7 h-2.5z" fill="#444"/><path d="M1768 929 l3.5 4 h-2 v3.5 h3.5 v-2 l4 3.5 l-4 3.5 v-2 h-3.5 v3.5 h2 l-3.5 4 l-3.5 -4 h2 v-3.5 h-3.5 v2 l-4 -3.5 l4 -3.5 v2 h3.5 v-3.5 h-2z" fill="#444"/><circle cx="1795" cy="938.5" r="7" fill="#f4f4f4" stroke="#777" stroke-width="1.3"/><rect x="1791" y="937.5" width="8" height="2.2" fill="#444"/><circle cx="1821" cy="938.5" r="7" fill="#f4f4f4" stroke="#777" stroke-width="1.3"/><rect x="1817" y="937.5" width="8" height="2.2" fill="#444"/><rect x="1819.9" y="934.5" width="2.2" height="8" fill="#444"/><path d="M1851 938.5 l6 -5 v10z" fill="#bdbdbd"/><path d="M1884 938.5 l-6 -5 v10z" fill="#bdbdbd"/><rect x="1899.5" y="931.5" width="13" height="13" fill="#f4f4f4" stroke="#444" stroke-width="1.3"/><path d="M1900 934.5 h12 M1902 937.5 h9 M1902 940 h9 M1902 942.5 h9" stroke="#444" stroke-width="1"/><rect x="0" y="955" width="1920" height="41" fill="#e9e9e9"/><rect x="0" y="955" width="1920" height="1" fill="#f8f8f8"/><rect x="0" y="993.5" width="1920" height="1.2" fill="#a8a8a8"/><rect x="0" y="994.7" width="1920" height="1.3" fill="#fafafa"/><rect x="6" y="958" width="7" height="35" fill="#d0d0d0"/><rect x="8" y="975" width="3" height="3" fill="#666"/><rect x="325" y="958" width="7" height="35" fill="#d0d0d0"/><rect x="327" y="975" width="3" height="3" fill="#666"/><rect x="487" y="958" width="7" height="35" fill="#d0d0d0"/><rect x="489" y="975" width="3" height="3" fill="#666"/><rect x="181" y="958" width="1.5" height="35" fill="#b4b4b4"/><rect x="318" y="958" width="1.5" height="35" fill="#b4b4b4"/><rect x="480" y="958" width="1.5" height="35" fill="#b4b4b4"/><rect x="708" y="958" width="1.5" height="35" fill="#b4b4b4"/><rect x="17.5" y="964.5" width="159" height="24" rx="2" fill="#fff" stroke="#a0a0a0"/><rect x="36" y="975" width="101" height="1.5" fill="#222"/><path d="M162 973 l4.5 4.5 l4.5 -4.5" stroke="#444" stroke-width="1.3" fill="none"/><rect x="187.5" y="964.5" width="121" height="24" rx="2" fill="#fff" stroke="#a0a0a0"/><rect x="201" y="975" width="74" height="1.5" fill="#222"/><path d="M294 973 l4.5 4.5 l4.5 -4.5" stroke="#444" stroke-width="1.3" fill="none"/><rect x="340.5" y="962.5" width="11" height="11" fill="#0000ff" stroke="#c8c8c8"/><rect x="355.5" y="962.5" width="11" height="11" fill="#ff0000" stroke="#c8c8c8"/><rect x="370.5" y="962.5" width="11" height="11" fill="#a8e8e8" stroke="#c8c8c8"/><rect x="385.5" y="962.5" width="11" height="11" fill="#80f0c0" stroke="#c8c8c8"/><rect x="400.5" y="962.5" width="11" height="11" fill="#8080c8" stroke="#c8c8c8"/><rect x="415.5" y="962.5" width="11" height="11" fill="#ffa860" stroke="#c8c8c8"/><rect x="430.5" y="962.5" width="11" height="11" fill="#ffc0c8" stroke="#c8c8c8"/><rect x="445.5" y="962.5" width="11" height="11" fill="#e0e0f8" stroke="#c8c8c8"/><rect x="340.5" y="977.5" width="11" height="11" fill="#ffc800" stroke="#c8c8c8"/><rect x="355.5" y="977.5" width="11" height="11" fill="#ffff00" stroke="#c8c8c8"/><rect x="370.5" y="977.5" width="11" height="11" fill="#606060" stroke="#c8c8c8"/><rect x="385.5" y="977.5" width="11" height="11" fill="#20c020" stroke="#c8c8c8"/><rect x="400.5" y="977.5" width="11" height="11" fill="#fffff0" stroke="#c8c8c8"/><rect x="415.5" y="977.5" width="11" height="11" fill="#ff6010" stroke="#c8c8c8"/><rect x="430.5" y="977.5" width="11" height="11" fill="#90e890" stroke="#c8c8c8"/><rect x="445.5" y="977.5" width="11" height="11" fill="#800000" stroke="#c8c8c8"/><rect x="355" y="961" width="13" height="14" fill="none" stroke="#888" stroke-dasharray="1 1"/><path d="M461 975 h7 l-3.5 4z" fill="#111"/><rect x="505.5" y="969.5" width="19" height="15" fill="#fafafa" stroke="#7a8aa0"/><path d="M508 980 l4 -4 l2 2" stroke="#e03030" stroke-width="1.2" fill="none"/><text x="516" y="983" font-size="11" font-family="Liberation Sans" fill="#333">1</text><rect x="538.5" y="969.5" width="19" height="15" fill="#fafafa" stroke="#7a8aa0"/><path d="M541 980 l4 -4 l2 2" stroke="#e03030" stroke-width="1.2" fill="none"/><text x="549" y="983" font-size="11" font-family="Liberation Sans" fill="#333">2</text><rect x="572.5" y="969.5" width="19" height="15" fill="#fafafa" stroke="#7a8aa0"/><path d="M575 980 l4 -4 l2 2" stroke="#e03030" stroke-width="1.2" fill="none"/><text x="583" y="983" font-size="11" font-family="Liberation Sans" fill="#333">3</text><rect x="606.5" y="969.5" width="19" height="15" fill="#fafafa" stroke="#7a8aa0"/><path d="M609 980 l4 -4 l2 2" stroke="#e03030" stroke-width="1.2" fill="none"/><text x="617" y="983" font-size="11" font-family="Liberation Sans" fill="#333">4</text><rect x="640.5" y="969.5" width="19" height="15" fill="#fafafa" stroke="#7a8aa0"/><path d="M643 980 l4 -4 l2 2" stroke="#e03030" stroke-width="1.2" fill="none"/><text x="651" y="983" font-size="11" font-family="Liberation Sans" fill="#333">5</text><rect x="674.5" y="969.5" width="19" height="15" fill="#fafafa" stroke="#7a8aa0"/><path d="M677 980 l4 -4 l2 2" stroke="#e03030" stroke-width="1.2" fill="none"/><text x="685" y="983" font-size="11" font-family="Liberation Sans" fill="#333">6</text><rect x="0" y="996" width="1920" height="24" fill="#434343"/><text x="13" y="1014" font-size="15" font-family="Liberation Sans" fill="#eaeaea">For Help, press F1</text><text x="1581" y="1014" font-size="15" font-family="Liberation Sans" fill="#eaeaea">18/10/2022</text><text x="1684" y="1014" font-size="15" font-family="Liberation Sans" fill="#eaeaea">04:00</text><text x="1777" y="1014" font-size="15" font-family="Liberation Sans" fill="#eaeaea">346.419</text><rect x="1864" y="999" width="25" height="19" fill="#f8f8f8"/><text x="1869" y="1014.5" font-size="16" font-weight="bold" font-family="Liberation Sans" fill="#20a020">$</text><rect x="1893" y="999" width="26" height="19" fill="#e0e0e0"/><rect x="1897" y="1002" width="11" height="9" fill="#3070c0"/><rect x="1904" y="1005" width="11" height="9" fill="#60a0e0"/></svg>
<svg style="position:absolute;left:0;top:0" width="1920" height="1080"><defs><linearGradient id="win" x1="0" y1="0" x2="1" y2="1"><stop offset="0" stop-color="#7fdcff"/><stop offset="1" stop-color="#1aa0f0"/></linearGradient><linearGradient id="ms" x1="0" y1="0" x2="0" y2="1"><stop offset="0" stop-color="#505050"/><stop offset="1" stop-color="#000"/></linearGradient><linearGradient id="cl" x1="0" y1="0" x2="0" y2="1"><stop offset="0" stop-color="#b8d4f8"/><stop offset="1" stop-color="#e8eef8"/></linearGradient></defs><rect x="0" y="1020" width="1920" height="60" fill="#201b26"/><path d="M30 1058 a6 6 0 0 1 0 -11 a9 9 0 0 1 17 -3 a7 7 0 0 1 9 7 a6 6 0 0 1 -3 7z" fill="url(#cl)"/><text x="65" y="1046" font-size="15" font-family="Liberation Sans" fill="#f0f0f0">17°C</text><text x="65" y="1066" font-size="15" font-family="Liberation Sans" fill="#e0e0e0">Cloudy</text><rect x="506" y="1036" width="13.5" height="13.5" rx="1.5" fill="url(#win)"/><rect x="521.5" y="1036" width="13.5" height="13.5" rx="1.5" fill="url(#win)"/><rect x="506" y="1051.5" width="13.5" height="13.5" rx="1.5" fill="url(#win)"/><rect x="521.5" y="1051.5" width="13.5" height="13.5" rx="1.5" fill="url(#win)"/><circle cx="577" cy="1047" r="10" fill="#3a3640" stroke="#e8e8e8" stroke-width="3"/><path d="M570 1054 l-6 7" stroke="#e8e8e8" stroke-width="3.5" stroke-linecap="round"/><circle cx="630.5" cy="1049" r="14.5" fill="#6a60d8"/><path d="M617 1064 l3 -8 l6 4z" fill="#6a60d8"/><rect x="622" y="1043" width="13" height="11" rx="2" fill="#fff"/><path d="M635 1048 l5 -4 v10 l-5 -4z" fill="#fff"/><rect x="682" y="1039" width="19" height="22" fill="#fff"/><path d="M684 1043 h14 M684 1047 h14 M684 1051 h14 M684 1055 h14" stroke="#2b579a" stroke-width="1.5"/><path d="M672 1040 l17 -4 v30 l-17 -4z" fill="#2b5aa8"/><text x="674" y="1056" font-size="13" font-weight="bold" font-family="Liberation Sans" fill="#fff">W</text><rect x="726" y="1035" width="30" height="30" rx="3" fill="url(#ms)"/><path d="M734 1061 l2 -10 h3 l-2 10z M740 1061 l3 -16 h3 l-3 16z M747 1061 l4 -22 h3 l-4 22z" fill="#f08020"/><path d="M781 1039 h10 l3 3 h17 v22 h-30z" fill="#f0c030"/><rect x="781" y="1045" width="30" height="19" fill="#ffd850"/><rect x="789" y="1057" width="15" height="5" rx="1" fill="#1a80d0"/><circle cx="850" cy="1050" r="15" fill="#db4437"/><path d="M850 1050 L863.0 1057.5 A15 15 0 0 1 842.5 1063.0z" fill="#fcc934"/><path d="M850 1050 L837.0 1057.5 A15 15 0 0 0 854.5 1064.2z" fill="#1e8e3e"/><path d="M850 1050 L863.0 1057.5 A15 15 0 0 1 854.5 1064.2z" fill="#fcc934"/><circle cx="850" cy="1050" r="6.8" fill="#fff"/><circle cx="850" cy="1050" r="5.1" fill="#1a73e8"/><circle cx="862" cy="1039" r="9.5" fill="#e8700a"/><text x="857" y="1044" font-size="12" font-weight="bold" font-family="Liberation Sans" fill="#fff">N</text><rect x="902" y="1039" width="17" height="22" fill="#fff"/><path d="M891 1040 l17 -4 v30 l-17 -4z" fill="#d04424"/><text x="894" y="1056" font-size="13" font-weight="bold" font-family="Liberation Sans" fill="#fff">P</text><path d="M910 1045 h6 M910 1049 h6" stroke="#d04424" stroke-width="1.5"/><path d="M955 1037 h11 l7 23 h-25z" fill="#f08a00"/><path d="M953 1046 h15 l1.5 4 h-18z M950 1055 h21 l1 3 h-23z" fill="#fff"/><rect x="947" y="1060" width="27" height="3.5" fill="#f07800"/><defs><linearGradient id="edg" x1="0" y1="1" x2="1" y2="0"><stop offset="0" stop-color="#0a64c8"/><stop offset="0.5" stop-color="#20a8e0"/><stop offset="1" stop-color="#6ee850"/></linearGradient></defs><circle cx="1016" cy="1049.7" r="15" fill="url(#edg)"/><path d="M1001 1050 q1 -9 9.5 -8.5 q6 0.5 6.5 5 q-5 0 -5.5 4.5 q0 7.5 9.5 8.5 q6 0.5 10 -2.5 q-4.5 7.5 -14.5 7.5 q-15 -1 -15.5 -14.5z" fill="#1258a8"/><circle cx="1016.3" cy="1049.3" r="3.7" fill="#201b26"/><path d="M1017 1051.5 q4 6 13.5 4 l-0.5 2 q-9 3 -14 -3z" fill="#201b26"/><rect x="1068" y="1039" width="17" height="22" fill="#fff"/><path d="M1057 1040 l17 -4 v30 l-17 -4z" fill="#3955a3"/><text x="1060" y="1056" font-size="13" font-weight="bold" font-family="Liberation Sans" fill="#fff">V</text><rect x="1076" y="1043" width="5" height="5" fill="none" stroke="#3955a3" stroke-width="1.3"/><rect x="1122" y="1039" width="18" height="22" fill="#fff"/><path d="M1124 1043 h14 M1124 1047 h14 M1124 1051 h14 M1124 1055 h14 M1130 1040 v20" stroke="#1d6f42" stroke-width="1.3"/><path d="M1111 1040 l17 -4 v30 l-17 -4z" fill="#1d7044"/><text x="1114" y="1056" font-size="13" font-weight="bold" font-family="Liberation Sans" fill="#fff">X</text><circle cx="1181" cy="1050" r="15" fill="#db4437"/><path d="M1181 1050 L1194.0 1057.5 A15 15 0 0 1 1173.5 1063.0z" fill="#fcc934"/><path d="M1181 1050 L1168.0 1057.5 A15 15 0 0 0 1185.5 1064.2z" fill="#1e8e3e"/><path d="M1181 1050 L1194.0 1057.5 A15 15 0 0 1 1185.5 1064.2z" fill="#fcc934"/><circle cx="1181" cy="1050" r="6.8" fill="#fff"/><circle cx="1181" cy="1050" r="5.1" fill="#1a73e8"/><rect x="1224" y="1035" width="23" height="30" rx="2" fill="#8a96a6"/><rect x="1227" y="1038" width="17" height="5" fill="#58c8f0"/><rect x="1227" y="1045" width="4.5" height="4" fill="#e8ecf0"/><rect x="1227" y="1050" width="4.5" height="4" fill="#e8ecf0"/><rect x="1227" y="1055" width="4.5" height="4" fill="#e8ecf0"/><rect x="1227" y="1060" width="4.5" height="4" fill="#e8ecf0"/><rect x="1233" y="1045" width="4.5" height="4" fill="#e8ecf0"/><rect x="1233" y="1050" width="4.5" height="4" fill="#e8ecf0"/><rect x="1233" y="1055" width="4.5" height="4" fill="#e8ecf0"/><rect x="1233" y="1060" width="4.5" height="4" fill="#e8ecf0"/><rect x="1239" y="1045" width="4.5" height="4" fill="#e8ecf0"/><rect x="1239" y="1050" width="4.5" height="4" fill="#e8ecf0"/><rect x="1239" y="1055" width="4.5" height="4" fill="#1e5aa0"/><rect x="1239" y="1060" width="4.5" height="4" fill="#1e5aa0"/><rect x="1276" y="1036" width="30" height="29" fill="#0e8080"/><path d="M1282 1061 h18 l-2 -5 h-14z M1284 1055 q-5 -8 3 -10 q4 -1 4 2 q0 -3 4 -2 q8 2 3 10z" fill="#fff"/><rect x="1290" y="1038" width="2" height="7" fill="#fff"/><rect x="1288" y="1040" width="6" height="2" fill="#fff"/><rect x="1321" y="1025" width="50" height="49" rx="4" fill="#2e2b38"/><rect x="1331" y="1034" width="30" height="30" rx="3" fill="url(#ms)"/><path d="M1339 1060 l2 -10 h3 l-2 10z M1345 1060 l3 -16 h3 l-3 16z M1352 1060 l4 -22 h3 l-4 22z" fill="#f08020"/><rect x="1336" y="1071" width="20" height="3" rx="1.5" fill="#60c8f8"/><rect x="1376" y="1025" width="50" height="49" rx="4" fill="#4a1f2a"/><rect x="1386" y="1035" width="30" height="30" rx="4" fill="none" stroke="#b02030" stroke-width="1.5"/><text x="1388" y="1059" font-size="15" font-family="Liberation Sans" fill="#c02838">Pro</text><rect x="1396" y="1071" width="10" height="3" rx="1.5" fill="#f090a0"/><rect x="680" y="1071" width="10" height="3" rx="1.5" fill="#9a9a9a"/><rect x="845" y="1071" width="10" height="3" rx="1.5" fill="#9a9a9a"/><rect x="1120" y="1071" width="10" height="3" rx="1.5" fill="#9a9a9a"/><rect x="1230" y="1071" width="10" height="3" rx="1.5" fill="#9a9a9a"/><path d="M1629 1054 l7 -7 l7 7" stroke="#eee" stroke-width="1.6" fill="none"/><path d="M1658 1056 a4 4 0 0 1 0 -8 a6 6 0 0 1 11 -1 a5 5 0 0 1 3 9z" fill="#bbb"/><circle cx="1670" cy="1055" r="5" fill="#e02030"/><path d="M1668 1053 l4 4 M1672 1053 l-4 4" stroke="#fff" stroke-width="1.2"/><path d="M1691 1047 a13 13 0 0 1 18 0 M1694 1050.5 a8.5 8.5 0 0 1 12 0 M1697 1054 a4 4 0 0 1 6 0" stroke="#f0f0f0" stroke-width="1.8" fill="none"/><circle cx="1700" cy="1057" r="1.5" fill="#f0f0f0"/><path d="M1722 1047 h4 l5 -4 v14 l-5 -4 h-4z" fill="none" stroke="#eee" stroke-width="1.5"/><path d="M1734 1046 a6 6 0 0 1 0 8" stroke="#eee" stroke-width="1.4" fill="none"/><path d="M1737 1044 a9 9 0 0 1 0 12" stroke="#888" stroke-width="1.4" fill="none"/><rect x="1755.5" y="1045.5" width="15" height="10" rx="2" fill="none" stroke="#eee" stroke-width="1.5"/><rect x="1771" y="1048" width="2" height="5" fill="#eee"/><rect x="1757" y="1047" width="5" height="7" fill="#eee"/><path d="M1754 1043 v4 M1757 1043 v4" stroke="#eee" stroke-width="1.2"/><text x="1865" y="1046" text-anchor="end" font-size="15" font-family="Liberation Sans" fill="#f4f4f4">19:22</text><text x="1865" y="1066" text-anchor="end" font-size="15" font-family="Liberation Sans" fill="#f4f4f4">20/10/2022</text><circle cx="1885" cy="1050.5" r="10" fill="#4cc2ff"/><text x="1885" y="1056" text-anchor="middle" font-size="14" font-family="Liberation Sans" fill="#111">1</text></svg></div></body></html>
